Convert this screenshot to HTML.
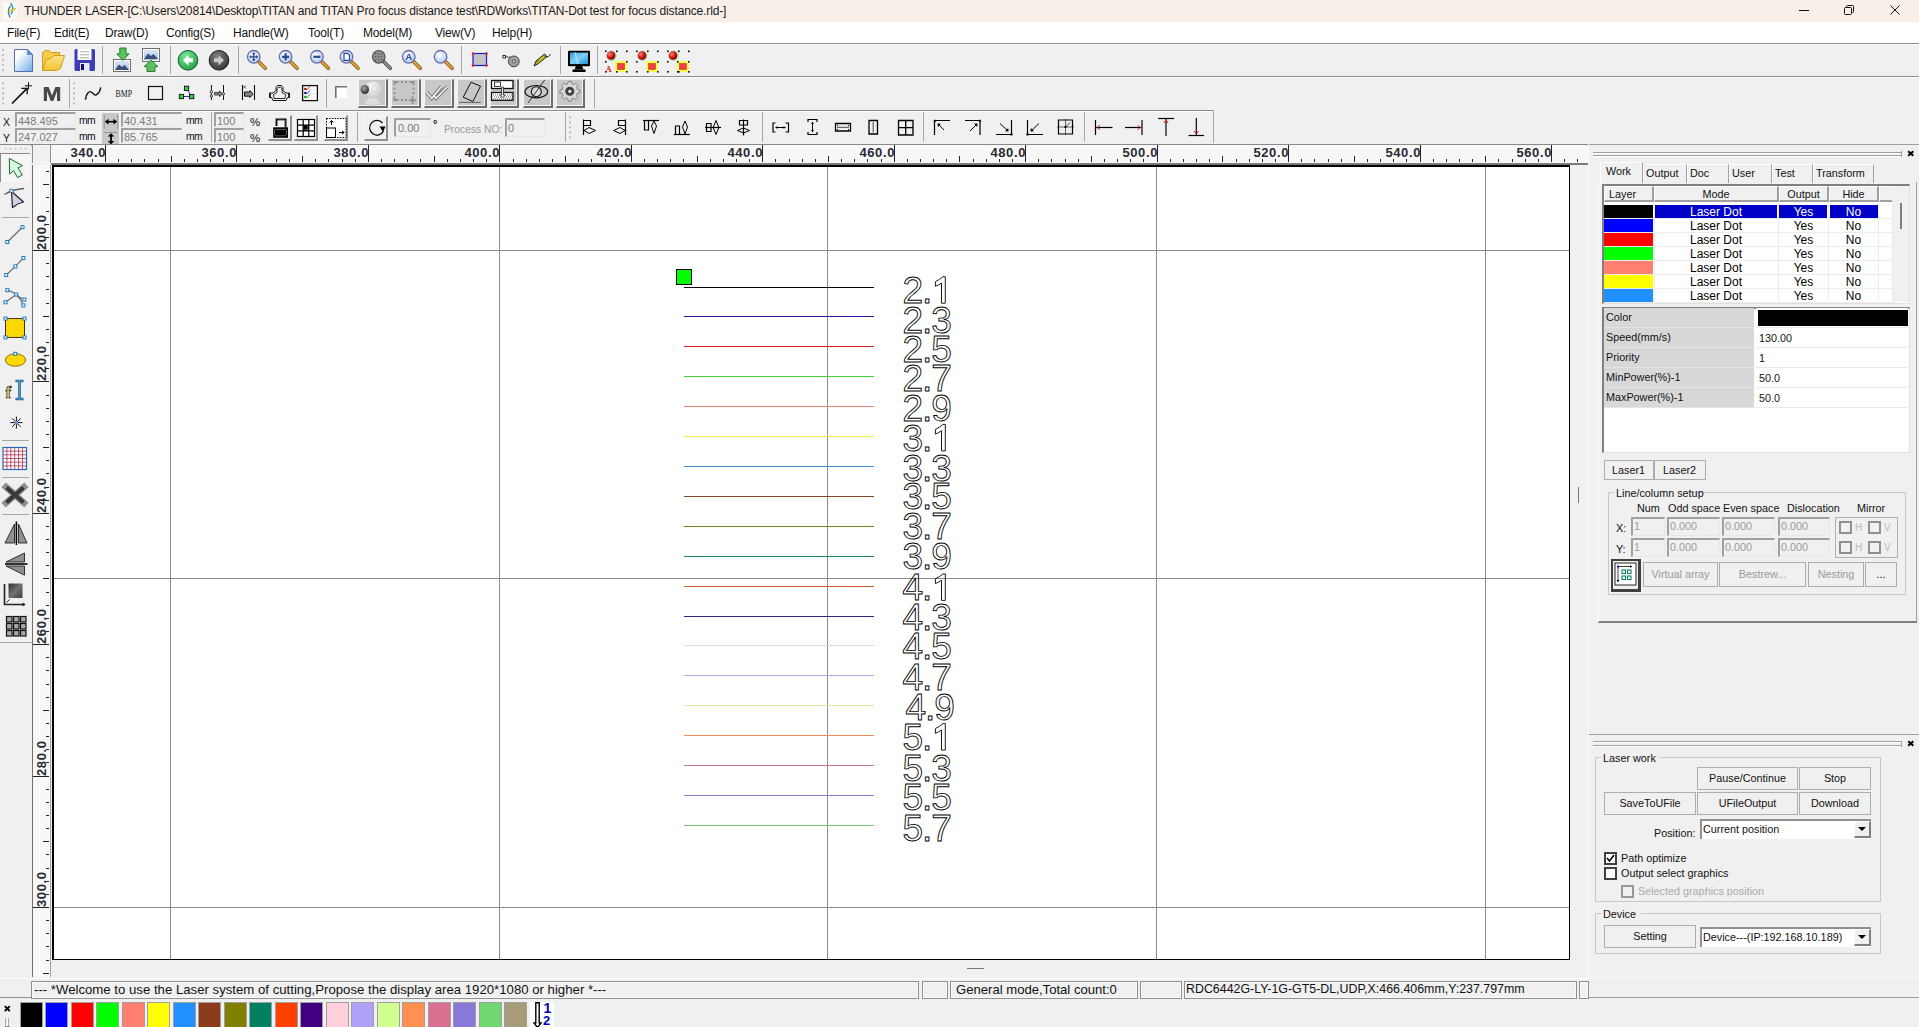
<!DOCTYPE html><html><head><meta charset="utf-8"><style>
html,body{margin:0;padding:0}
body{width:1919px;height:1027px;position:relative;overflow:hidden;background:#f0f0f0;font-family:"Liberation Sans",sans-serif;color:#000}
div{position:absolute;box-sizing:border-box}
.t{white-space:pre;line-height:1}
svg{position:absolute;overflow:visible}
.inp{background:#f0f0f0;border-top:2px solid #a0a0a0;border-left:2px solid #a0a0a0;border-right:1px solid #e8e8e8;border-bottom:1px solid #e8e8e8}
.btn{background:#f0f0f0;border:1px solid #adadad}
.grp{border:1px solid #c8c8c8}
.sep{background:#a8a8a8;width:1px}
</style></head><body>
<div style="left:0px;top:0px;width:1919px;height:22px;background:#f8f0e8"></div>
<div class="t" style="left:24px;top:5.2px;font-size:12px;letter-spacing:-0.14px;color:#1a1a1a">THUNDER LASER-[C:\Users\20814\Desktop\TITAN and TITAN Pro focus distance test\RDWorks\TITAN-Dot test for focus distance.rld-]</div>
<svg style="left:0px;top:0px" width="22" height="22" viewBox="0 0 22 22" ><rect x="3" y="2.5" width="14" height="17.5" fill="#fdfaf6"/><path d="M10.5 6 Q6.5 10.5 10 17.5" fill="none" stroke="#2a7aa8" stroke-width="1.3"/><path d="M10.5 3 Q15 8 11 14.5" fill="none" stroke="#2a8ac0" stroke-width="1.3"/><path d="M8.5 11.8 L16 8.5" stroke="#e0c030" stroke-width="1.6"/></svg>
<svg style="left:1799px;top:4px" width="11" height="12" viewBox="0 0 11 12" ><line x1="0" y1="6.5" x2="10" y2="6.5" stroke="#111" stroke-width="1"/></svg>
<svg style="left:1844px;top:5px" width="11" height="11" viewBox="0 0 11 11" ><rect x="0.5" y="2.5" width="7" height="7" rx="1" fill="none" stroke="#111"/><path d="M2.5 2.5 V1.5 a1 1 0 0 1 1 -1 H8.5 a1 1 0 0 1 1 1 V6.5 a1 1 0 0 1 -1 1 H7.5" fill="none" stroke="#111"/></svg>
<svg style="left:1890px;top:5px" width="11" height="11" viewBox="0 0 11 11" ><path d="M0.5 0.5 L9.5 9.5 M9.5 0.5 L0.5 9.5" stroke="#111" stroke-width="1"/></svg>
<div style="left:0px;top:22px;width:1919px;height:21px;background:#fff"></div>
<div style="left:0px;top:43px;width:1919px;height:1px;background:#8c8c8c"></div>
<div class="t" style="left:7px;top:26.5px;font-size:12px;letter-spacing:-0.2px;color:#111">File(F)</div>
<div class="t" style="left:54px;top:26.5px;font-size:12px;letter-spacing:-0.2px;color:#111">Edit(E)</div>
<div class="t" style="left:105px;top:26.5px;font-size:12px;letter-spacing:-0.2px;color:#111">Draw(D)</div>
<div class="t" style="left:166px;top:26.5px;font-size:12px;letter-spacing:-0.2px;color:#111">Config(S)</div>
<div class="t" style="left:233px;top:26.5px;font-size:12px;letter-spacing:-0.2px;color:#111">Handle(W)</div>
<div class="t" style="left:308px;top:26.5px;font-size:12px;letter-spacing:-0.2px;color:#111">Tool(T)</div>
<div class="t" style="left:363px;top:26.5px;font-size:12px;letter-spacing:-0.2px;color:#111">Model(M)</div>
<div class="t" style="left:435px;top:26.5px;font-size:12px;letter-spacing:-0.2px;color:#111">View(V)</div>
<div class="t" style="left:492px;top:26.5px;font-size:12px;letter-spacing:-0.2px;color:#111">Help(H)</div>
<div style="left:0px;top:76px;width:1919px;height:1px;background:#8c8c8c"></div>
<div style="left:0px;top:77px;width:1919px;height:1px;background:#fcfcfc"></div>
<div style="left:0px;top:44px;width:1919px;height:1px;background:#fcfcfc"></div>
<div style="left:0px;top:111px;width:1213px;height:1px;background:#fcfcfc"></div>
<div style="left:0px;top:110px;width:1213px;height:1px;background:#8c8c8c"></div>
<div style="left:1213px;top:110px;width:1px;height:33px;background:#a8a8a8"></div>
<div style="left:102px;top:46px;width:1px;height:28px;background:#a8a8a8"></div>
<div style="left:170px;top:46px;width:1px;height:28px;background:#a8a8a8"></div>
<div style="left:238px;top:46px;width:1px;height:28px;background:#a8a8a8"></div>
<div style="left:461px;top:46px;width:1px;height:28px;background:#a8a8a8"></div>
<div style="left:560px;top:46px;width:1px;height:28px;background:#a8a8a8"></div>
<div style="left:597px;top:46px;width:1px;height:28px;background:#a8a8a8"></div>
<div style="left:69px;top:79px;width:1px;height:29px;background:#a8a8a8"></div>
<div style="left:326px;top:79px;width:1px;height:29px;background:#a8a8a8"></div>
<div style="left:594px;top:79px;width:1px;height:29px;background:#a8a8a8"></div>
<div style="left:211px;top:112px;width:1px;height:30px;background:#a8a8a8"></div>
<div style="left:357px;top:112px;width:1px;height:30px;background:#a8a8a8"></div>
<div style="left:565px;top:112px;width:1px;height:30px;background:#a8a8a8"></div>
<div style="left:762px;top:112px;width:1px;height:30px;background:#a8a8a8"></div>
<div style="left:923px;top:112px;width:1px;height:30px;background:#a8a8a8"></div>
<div style="left:1084px;top:112px;width:1px;height:30px;background:#a8a8a8"></div>
<svg style="left:0;top:0" width="1919" height="1027" viewBox="0 0 1919 1027"><defs>
<linearGradient id="gdoc" x1="0" y1="0" x2="1" y2="1"><stop offset="0.25" stop-color="#fff"/><stop offset="1" stop-color="#6aaae6"/></linearGradient>
<linearGradient id="gfold" x1="0" y1="0" x2="0" y2="1"><stop offset="0" stop-color="#fde48a"/><stop offset="1" stop-color="#f2c230"/></linearGradient>
<radialGradient id="ggreen" cx="0.4" cy="0.3" r="0.8"><stop offset="0" stop-color="#7ee8a0"/><stop offset="1" stop-color="#1e9a40"/></radialGradient>
<radialGradient id="ggrey" cx="0.4" cy="0.3" r="0.8"><stop offset="0" stop-color="#808080"/><stop offset="1" stop-color="#303030"/></radialGradient>
<radialGradient id="glens" cx="0.4" cy="0.35" r="0.7"><stop offset="0" stop-color="#ffffff"/><stop offset="1" stop-color="#a8c8f0"/></radialGradient>
<linearGradient id="gscreen" x1="0" y1="0" x2="1" y2="1"><stop offset="0" stop-color="#30a0e0"/><stop offset="0.5" stop-color="#80d0f8"/><stop offset="1" stop-color="#1890d8"/></linearGradient>
<linearGradient id="gpic" x1="0" y1="0" x2="0" y2="1"><stop offset="0" stop-color="#d8e8f8"/><stop offset="1" stop-color="#a8c0e0"/></linearGradient>
<radialGradient id="gball" cx="0.35" cy="0.35" r="0.7"><stop offset="0" stop-color="#ff8080"/><stop offset="0.6" stop-color="#d01010"/><stop offset="1" stop-color="#700000"/></radialGradient>
</defs><rect x="2.2" y="49" width="1.8" height="1.8" fill="#b4b4b4"/><rect x="2.2" y="54" width="1.8" height="1.8" fill="#b4b4b4"/><rect x="2.2" y="59" width="1.8" height="1.8" fill="#b4b4b4"/><rect x="2.2" y="64" width="1.8" height="1.8" fill="#b4b4b4"/><rect x="2.2" y="69" width="1.8" height="1.8" fill="#b4b4b4"/><path d="M14.5 49.5 H27.5 L32.5 54.5 V71.5 H14.5 Z" fill="url(#gdoc)" stroke="#5870b0" stroke-width="1"/><path d="M27.5 49.5 V54.5 H32.5 Z" fill="#4a90e0" stroke="#5870b0" stroke-width="0.6"/><path d="M42.5 70.5 V53 L44.8 50.5 H49 L51 52.5 H59.5 V56 L64.5 56 Z" fill="#f4cc48" stroke="#d49a20" stroke-width="1"/><path d="M42.5 70.5 L46 59.5 L51 58.5 L54 55.5 H64.5 L60.5 68.5 L56.5 70.5 Z" fill="url(#gfold)" stroke="#d49a20" stroke-width="1"/><path d="M74.5 50.5 Q74.5 49 76 49 H93.5 Q95 49 95 50.5 V69.5 Q95 71 93.5 71 H76 Q74.5 71 74.5 69.5 Z" fill="#3c3cb4"/><rect x="77.5" y="49" width="14" height="11" fill="#fff"/><path d="M80 51.8 H89 M80 54.8 H89 M80 57.8 H89" stroke="#a0a0a0" stroke-width="0.9"/><rect x="80" y="63" width="9.5" height="8" fill="#e8e8f0"/><rect x="81" y="64" width="3" height="6" fill="#10106a"/><rect x="113.5" y="59.5" width="17" height="12" fill="#fff" stroke="#707070"/><rect x="115" y="61" width="14" height="9" fill="url(#gpic)"/><path d="M115 70 L119 64.5 L122 67 L124.5 65 L129 70 Z" fill="#3a5078"/><path d="M119.8 48 H126 V53.8 H129 L122.9 60.5 L116.8 53.8 H119.8 Z" fill="#5cc060" stroke="#1a7a20" stroke-width="0.9"/><rect x="142.5" y="48.5" width="17" height="13" fill="#fff" stroke="#707070"/><rect x="144" y="50" width="14" height="10" fill="url(#gpic)"/><path d="M144 59 L148 53.5 L151 56 L153.5 54 L158 59 Z" fill="#3a5078"/><path d="M147 71.5 H155 V66.7 H158 L151 60 L144 66.7 H147 Z" fill="#5cc060" stroke="#1a7a20" stroke-width="0.9"/><circle cx="188" cy="60.3" r="9.8" fill="url(#ggreen)" stroke="#0a5a20" stroke-width="1"/><path d="M183 60.3 L188.5 55 V58.3 H193 V62.3 H188.5 V65.6 Z" fill="#fff"/><circle cx="219" cy="60.3" r="9.8" fill="url(#ggrey)" stroke="#1a1a1a" stroke-width="1"/><path d="M224 60.3 L218.5 55 V58.3 H214 V62.3 H218.5 V65.6 Z" fill="#c8c8c8"/><line x1="258.25" y1="61.3" x2="265.25" y2="68.3" stroke="#805020" stroke-width="3.6" stroke-linecap="round"/><line x1="258.25" y1="61.3" x2="265.25" y2="68.3" stroke="#e0a030" stroke-width="2.2" stroke-linecap="round"/><circle cx="253.75" cy="56.8" r="6.3" fill="url(#glens)" stroke="#6a6aa8" stroke-width="1.3"/><path d="M249.75 56.8 H257.75 M253.75 52.8 V60.8" stroke="#2a4a90" stroke-width="1.3"/><path d="M249.25 56.8 l2 -1.8 v3.6 Z M258.25 56.8 l-2 -1.8 v3.6 Z M253.75 52.3 l-1.8 2 h3.6 Z M253.75 61.3 l-1.8 -2 h3.6 Z" fill="#2a4a90"/><line x1="290.1" y1="61.3" x2="297.1" y2="68.3" stroke="#805020" stroke-width="3.6" stroke-linecap="round"/><line x1="290.1" y1="61.3" x2="297.1" y2="68.3" stroke="#e0a030" stroke-width="2.2" stroke-linecap="round"/><circle cx="285.6" cy="56.8" r="6.3" fill="url(#glens)" stroke="#6a6aa8" stroke-width="1.3"/><path d="M282.1 56.8 H289.1 M285.6 53.3 V60.3" stroke="#2a4a90" stroke-width="2.2"/><line x1="321.4" y1="61.3" x2="328.4" y2="68.3" stroke="#805020" stroke-width="3.6" stroke-linecap="round"/><line x1="321.4" y1="61.3" x2="328.4" y2="68.3" stroke="#e0a030" stroke-width="2.2" stroke-linecap="round"/><circle cx="316.9" cy="56.8" r="6.3" fill="url(#glens)" stroke="#6a6aa8" stroke-width="1.3"/><path d="M313.4 56.8 H320.4" stroke="#2a4a90" stroke-width="2.2"/><line x1="351.0" y1="61.3" x2="358.0" y2="68.3" stroke="#805020" stroke-width="3.6" stroke-linecap="round"/><line x1="351.0" y1="61.3" x2="358.0" y2="68.3" stroke="#e0a030" stroke-width="2.2" stroke-linecap="round"/><circle cx="346.5" cy="56.8" r="6.3" fill="url(#glens)" stroke="#6a6aa8" stroke-width="1.3"/><path d="M344.0 53.3 H347.5 L349.5 55.3 V60.3 H344.0 Z" fill="#fff" stroke="#2a4a90" stroke-width="1.2"/><line x1="383.25" y1="61.3" x2="390.25" y2="68.3" stroke="#404040" stroke-width="3.6" stroke-linecap="round"/><line x1="383.25" y1="61.3" x2="390.25" y2="68.3" stroke="#909090" stroke-width="2.2" stroke-linecap="round"/><circle cx="378.75" cy="56.8" r="6.3" fill="#909090" stroke="#505050" stroke-width="1.2"/><rect x="375.25" y="53.3" width="1" height="1" fill="#303030"/><rect x="375.25" y="56.3" width="1" height="1" fill="#303030"/><rect x="375.25" y="59.3" width="1" height="1" fill="#303030"/><rect x="378.25" y="53.3" width="1" height="1" fill="#303030"/><rect x="378.25" y="56.3" width="1" height="1" fill="#303030"/><rect x="378.25" y="59.3" width="1" height="1" fill="#303030"/><rect x="381.25" y="53.3" width="1" height="1" fill="#303030"/><rect x="381.25" y="56.3" width="1" height="1" fill="#303030"/><rect x="381.25" y="59.3" width="1" height="1" fill="#303030"/><line x1="413.25" y1="61.3" x2="420.25" y2="68.3" stroke="#805020" stroke-width="3.6" stroke-linecap="round"/><line x1="413.25" y1="61.3" x2="420.25" y2="68.3" stroke="#e0a030" stroke-width="2.2" stroke-linecap="round"/><circle cx="408.75" cy="56.8" r="6.3" fill="url(#glens)" stroke="#6a6aa8" stroke-width="1.3"/><text x="408.75" y="60.3" text-anchor="middle" font-family="Liberation Sans" font-weight="bold" font-size="9.5" fill="#2a4a90">A</text><line x1="445.1" y1="61.3" x2="452.1" y2="68.3" stroke="#805020" stroke-width="3.6" stroke-linecap="round"/><line x1="445.1" y1="61.3" x2="452.1" y2="68.3" stroke="#e0a030" stroke-width="2.2" stroke-linecap="round"/><circle cx="440.6" cy="56.8" r="6.3" fill="url(#glens)" stroke="#6a6aa8" stroke-width="1.3"/><rect x="473" y="53.5" width="13.5" height="12" fill="#c4c4c4" stroke="#1a1ad0" stroke-width="1.2"/><circle cx="473" cy="53.5" r="1.3" fill="#e02020"/><circle cx="486.5" cy="53.5" r="1.3" fill="#e02020"/><circle cx="473" cy="65.5" r="1.3" fill="#e02020"/><circle cx="486.5" cy="65.5" r="1.3" fill="#e02020"/><rect x="503" y="55.5" width="2.5" height="2.5" fill="#fff" stroke="#000" stroke-width="0.8"/><path d="M505.5 56.8 L512 57.5" stroke="#000" stroke-width="0.7"/><circle cx="513.8" cy="61.4" r="5.4" fill="#a0a0a0" stroke="#404040" stroke-width="1"/><circle cx="513.8" cy="61.4" r="1.4" fill="#fff" stroke="#202020" stroke-width="0.8"/><path d="M534 66 L536 61 L544.5 54 L547 56.5 L538.5 63.5 Z" fill="#c8c020" stroke="#202020" stroke-width="1"/><path d="M544.5 56 C548 58 550 56 550 54" fill="none" stroke="#202020" stroke-width="1"/><path d="M536 63 L539 60" stroke="#707000" stroke-width="1"/><rect x="568" y="50.8" width="22" height="15.5" rx="1" fill="#000"/><rect x="570" y="52.6" width="18" height="11.5" fill="url(#gscreen)"/><path d="M574 52.6 L577 64 H579 L576 52.6 Z" fill="#b8e8ff" opacity="0.7"/><path d="M576 66 H582 L583.5 69.5 H574.5 Z" fill="#000"/><rect x="572.5" y="69.5" width="13" height="2.5" fill="#000"/><rect x="615" y="61" width="12" height="11" fill="#ffff40" opacity="0.9"/><rect x="617.5" y="63.5" width="7" height="6" fill="#f04040" stroke="#c02020" stroke-width="0.5"/><circle cx="611.5" cy="55.8" r="5.2" fill="#50d050" opacity="0.45"/><circle cx="611" cy="55.5" r="4.3" fill="url(#gball)"/><rect x="605" y="50.5" width="1.6" height="1.6" fill="#000"/><rect x="616" y="50.5" width="1.6" height="1.6" fill="#000"/><rect x="626" y="50.5" width="1.6" height="1.6" fill="#000"/><rect x="605" y="61.0" width="1.6" height="1.6" fill="#000"/><rect x="626" y="61.0" width="1.6" height="1.6" fill="#000"/><rect x="605" y="71.0" width="1.6" height="1.6" fill="#000"/><rect x="616" y="71.0" width="1.6" height="1.6" fill="#000"/><rect x="626" y="71.0" width="1.6" height="1.6" fill="#000"/><text x="605.5" y="72" font-family="Liberation Serif" font-size="8.5" fill="#e02020" font-weight="bold">A</text><rect x="646" y="61" width="12" height="11" fill="#ffff40" opacity="0.9"/><rect x="648.5" y="63.5" width="7" height="6" fill="#f04040" stroke="#c02020" stroke-width="0.5"/><circle cx="642.5" cy="55.8" r="5.2" fill="#50d050" opacity="0.45"/><circle cx="642" cy="55.5" r="4.3" fill="url(#gball)"/><rect x="636" y="50.5" width="1.6" height="1.6" fill="#000"/><rect x="647" y="50.5" width="1.6" height="1.6" fill="#000"/><rect x="657" y="50.5" width="1.6" height="1.6" fill="#000"/><rect x="636" y="61.0" width="1.6" height="1.6" fill="#000"/><rect x="657" y="61.0" width="1.6" height="1.6" fill="#000"/><rect x="636" y="71.0" width="1.6" height="1.6" fill="#000"/><rect x="647" y="71.0" width="1.6" height="1.6" fill="#000"/><rect x="657" y="71.0" width="1.6" height="1.6" fill="#000"/><rect x="677" y="61" width="12" height="11" fill="#ffff40" opacity="0.9"/><rect x="679.5" y="63.5" width="7" height="6" fill="#f04040" stroke="#c02020" stroke-width="0.5"/><circle cx="673.5" cy="55.8" r="5.2" fill="#50d050" opacity="0.45"/><circle cx="673" cy="55.5" r="4.3" fill="url(#gball)"/><rect x="667" y="50.5" width="1.6" height="1.6" fill="#000"/><rect x="678" y="50.5" width="1.6" height="1.6" fill="#000"/><rect x="688" y="50.5" width="1.6" height="1.6" fill="#000"/><rect x="667" y="61.0" width="1.6" height="1.6" fill="#000"/><rect x="688" y="61.0" width="1.6" height="1.6" fill="#000"/><rect x="667" y="71.0" width="1.6" height="1.6" fill="#000"/><rect x="678" y="71.0" width="1.6" height="1.6" fill="#000"/><rect x="688" y="71.0" width="1.6" height="1.6" fill="#000"/><rect x="677" y="61.0" width="1.6" height="1.6" fill="#000"/><rect x="677" y="71.0" width="1.6" height="1.6" fill="#000"/></svg>
<div style="left:358px;top:79px;width:30px;height:29px;background:#c8c8c8;border-left:1px solid #f4f4f4;border-top:1px solid #e8e8e8;border-right:2px solid #6e6e6e;border-bottom:2px solid #6e6e6e;box-shadow:inset -1px -1px 0 #f4f4f4"></div><div style="left:391px;top:79px;width:30px;height:29px;background:#c8c8c8;border-left:1px solid #f4f4f4;border-top:1px solid #e8e8e8;border-right:2px solid #6e6e6e;border-bottom:2px solid #6e6e6e;box-shadow:inset -1px -1px 0 #f4f4f4"></div><div style="left:424px;top:79px;width:30px;height:29px;background:#c8c8c8;border-left:1px solid #f4f4f4;border-top:1px solid #e8e8e8;border-right:2px solid #6e6e6e;border-bottom:2px solid #6e6e6e;box-shadow:inset -1px -1px 0 #f4f4f4"></div><div style="left:457px;top:79px;width:30px;height:29px;background:#c8c8c8;border-left:1px solid #f4f4f4;border-top:1px solid #e8e8e8;border-right:2px solid #6e6e6e;border-bottom:2px solid #6e6e6e;box-shadow:inset -1px -1px 0 #f4f4f4"></div><div style="left:490px;top:79px;width:29px;height:29px;background:#c8c8c8;border-left:1px solid #f4f4f4;border-top:1px solid #e8e8e8;border-right:2px solid #6e6e6e;border-bottom:2px solid #6e6e6e;box-shadow:inset -1px -1px 0 #f4f4f4"></div><div style="left:523px;top:79px;width:30px;height:29px;background:#c8c8c8;border-left:1px solid #f4f4f4;border-top:1px solid #e8e8e8;border-right:2px solid #6e6e6e;border-bottom:2px solid #6e6e6e;box-shadow:inset -1px -1px 0 #f4f4f4"></div><div style="left:556px;top:79px;width:29px;height:29px;background:#c8c8c8;border-left:1px solid #f4f4f4;border-top:1px solid #e8e8e8;border-right:2px solid #6e6e6e;border-bottom:2px solid #6e6e6e;box-shadow:inset -1px -1px 0 #f4f4f4"></div>
<svg style="left:0;top:0" width="1919" height="1027" viewBox="0 0 1919 1027"><rect x="2.2" y="82.5" width="1.8" height="1.8" fill="#b4b4b4"/><rect x="73.2" y="82.5" width="1.8" height="1.8" fill="#b4b4b4"/><rect x="2.2" y="87.5" width="1.8" height="1.8" fill="#b4b4b4"/><rect x="73.2" y="87.5" width="1.8" height="1.8" fill="#b4b4b4"/><rect x="2.2" y="92.5" width="1.8" height="1.8" fill="#b4b4b4"/><rect x="73.2" y="92.5" width="1.8" height="1.8" fill="#b4b4b4"/><rect x="2.2" y="97.5" width="1.8" height="1.8" fill="#b4b4b4"/><rect x="73.2" y="97.5" width="1.8" height="1.8" fill="#b4b4b4"/><rect x="2.2" y="102.5" width="1.8" height="1.8" fill="#b4b4b4"/><rect x="73.2" y="102.5" width="1.8" height="1.8" fill="#b4b4b4"/><path d="M12.5 103 L26.8 88.7" stroke="#111" stroke-width="1.7" stroke-linecap="round"/><path d="M21.3 88.3 H27.2 V94.2" fill="none" stroke="#111" stroke-width="1.3"/><path d="M28.5 82.2 V89.5 M24.8 85.8 H32" stroke="#111" stroke-width="1"/><path d="M43.8 101 V87.1 H48.6 L52 95.6 L55.4 87.1 H60.2 V101 H57 V91.3 L53.3 101 H50.7 L47 91.3 V101 Z" fill="#4a4a4a"/><path d="M85.5 99 C86 94 89 91 91 91.8 C93 92.5 94 96 96 95 C98.5 94 100.5 90 100.7 87.4" fill="none" stroke="#111" stroke-width="1.4"/><circle cx="85.6" cy="98.8" r="0.9" fill="#111"/><text x="115.5" y="97.3" font-family="Liberation Serif" font-size="9.6" fill="#222" textLength="16.5" lengthAdjust="spacingAndGlyphs">BMP</text><rect x="148.5" y="86.5" width="14" height="13" fill="none" stroke="#111" stroke-width="1.2"/><path d="M186.5 88.5 L191.5 96.5 M181.5 96.5 H191.5" stroke="#1a1ab0" stroke-width="0.9"/><rect x="184.4" y="86.2" width="4.3" height="4.3" fill="#30d040" stroke="#111" stroke-width="0.9"/><rect x="179.3" y="94.4" width="4.3" height="4.3" fill="#30d040" stroke="#111" stroke-width="0.9"/><rect x="189.5" y="94.4" width="4.3" height="4.3" fill="#30d040" stroke="#111" stroke-width="0.9"/><path d="M211.4 85 V100 M223.5 85 V100" stroke="#111" stroke-width="1"/><circle cx="211.4" cy="91.8" r="1.2" fill="#fff" stroke="#111" stroke-width="0.8"/><circle cx="211.4" cy="96" r="1.2" fill="#fff" stroke="#111" stroke-width="0.8"/><circle cx="223.5" cy="93.8" r="1.2" fill="#fff" stroke="#111" stroke-width="0.8"/><path d="M214.5 92.5 H219.5 V91 L222.5 93.8 L219.5 96.6 V95 H214.5 Z" fill="#888" stroke="#111" stroke-width="0.7"/><path d="M242.5 85 V100 M254.5 85 V100" stroke="#111" stroke-width="1.1"/><path d="M243 85.5 L246 88.5 M246 85.5 L243 88.5" stroke="#111" stroke-width="0.6"/><path d="M244.5 92 H250 V90.5 L253 94.2 L250 97.5 V96.2 H244.5 Z" fill="#888" stroke="#111" stroke-width="1"/><path d="M273 93 L276 90.5 V87.5 L277.5 85.5 H281.5 L283 87.5 V90.5 L286 93 H289.5 V97.5 H287.5 L286 100.5 H273 L271.5 97.5 H269.5 V93 Z" fill="none" stroke="#111" stroke-width="1"/><path d="M273.5 94.5 L277 92.5 V88.8 L278.2 87.3 H280.8 L282 88.8 V92.5 L285.5 94.5 L285 98.5 H274 Z" fill="none" stroke="#111" stroke-width="0.9"/><rect x="269" y="93" width="1.8" height="4.5" fill="#111"/><rect x="288.2" y="93" width="1.8" height="4.5" fill="#111"/><rect x="302.6" y="85.6" width="14.8" height="15" fill="#fff" stroke="#111" stroke-width="1.3"/><path d="M309 89.5 H315.5 M309 93.5 H315.5 M309 97.5 H315.5" stroke="#e4e4e4" stroke-width="0.8"/><rect x="304.2" y="87.8" width="2.2" height="2.2" fill="#b01010"/><path d="M305.5 89.3 L307 89.8 L310 86.3" fill="none" stroke="#b01010" stroke-width="0.9"/><rect x="304.2" y="91.8" width="2.2" height="2.2" fill="#1010a0"/><path d="M305.5 93.3 L307 93.8 L310 90.3" fill="none" stroke="#1010a0" stroke-width="0.9"/><rect x="304.2" y="95.8" width="2.2" height="2.2" fill="#109010"/><path d="M305.5 97.3 L307 97.8 L310 94.3" fill="none" stroke="#109010" stroke-width="0.9"/><rect x="335" y="86" width="12" height="12" fill="#fff"/><path d="M335.8 98 V86.8 H347" fill="none" stroke="#707070" stroke-width="1.6"/><defs><radialGradient id="gcam" cx="0.45" cy="0.35" r="0.7"><stop offset="0" stop-color="#fafafa"/><stop offset="1" stop-color="#c8c8c8"/></radialGradient><radialGradient id="glensg" cx="0.4" cy="0.35" r="0.7"><stop offset="0" stop-color="#a8a8a8"/><stop offset="1" stop-color="#202020"/></radialGradient></defs><ellipse cx="372.5" cy="102.5" rx="8.5" ry="2.8" fill="#dcdcdc" stroke="#c0c0c0" stroke-width="0.6"/><path d="M368 98 Q372.5 96 377 98 L378 101 H367 Z" fill="#e0e0e0"/><circle cx="373" cy="89.5" r="8.8" fill="url(#gcam)" stroke="#bdbdbd" stroke-width="0.6"/><circle cx="375" cy="89" r="3.2" fill="none" stroke="#c8c8c8" stroke-width="0.7"/><ellipse cx="364.8" cy="89.5" rx="4.2" ry="4.6" fill="url(#glensg)"/><path d="M394.5 85 V82 H398.5 M401 82 H403 M405 82 H407 M409.5 82 H413.5 V85 M413.5 87.5 V89.5 M413.5 92 V94 M394.5 87.5 V89.5 M394.5 92 V94 M394.5 96.5 V100 H398.5 M401 100 H403 M405 100 H407" fill="none" stroke="#909090" stroke-width="2"/><path d="M412.5 96.5 V104 M408.8 100.2 H416.2" stroke="#909090" stroke-width="2"/><path d="M426.5 92 L431.8 98.3 L441.5 86.5 M433.5 95 L436 98.3 L447.5 86.5" fill="none" stroke="#7a7a7a" stroke-width="3.6" stroke-linejoin="miter"/><path d="M426.5 92 L431.8 98.3 L441.5 86.5 M433.5 95 L436 98.3 L447.5 86.5" fill="none" stroke="#f4f4f4" stroke-width="1.5" stroke-linejoin="miter"/><path d="M471 82.2 L480.5 86.2 L472.9 101.5 L463.2 97.2 Z" fill="none" stroke="#111" stroke-width="1"/><path d="M459 102.4 H481" stroke="#606060" stroke-width="1"/><rect x="491.5" y="80.5" width="21.5" height="8" fill="#fff" stroke="#111" stroke-width="1.3"/><rect x="494.5" y="82" width="6" height="4.5" fill="#fff" stroke="#111" stroke-width="0.8"/><rect x="491.5" y="92.5" width="21.5" height="7.8" fill="#fff" stroke="#111" stroke-width="1.3"/><rect x="493" y="94.5" width="0.9" height="0.9" fill="#333"/><rect x="494" y="96.5" width="0.9" height="0.9" fill="#333"/><rect x="493" y="98.5" width="0.9" height="0.9" fill="#333"/><rect x="495" y="94.5" width="0.9" height="0.9" fill="#333"/><rect x="496" y="96.5" width="0.9" height="0.9" fill="#333"/><rect x="495" y="98.5" width="0.9" height="0.9" fill="#333"/><rect x="497" y="94.5" width="0.9" height="0.9" fill="#333"/><rect x="498" y="96.5" width="0.9" height="0.9" fill="#333"/><rect x="497" y="98.5" width="0.9" height="0.9" fill="#333"/><rect x="499" y="94.5" width="0.9" height="0.9" fill="#333"/><rect x="500" y="96.5" width="0.9" height="0.9" fill="#333"/><rect x="499" y="98.5" width="0.9" height="0.9" fill="#333"/><rect x="501" y="94.5" width="0.9" height="0.9" fill="#333"/><rect x="502" y="96.5" width="0.9" height="0.9" fill="#333"/><rect x="501" y="98.5" width="0.9" height="0.9" fill="#333"/><rect x="503" y="94.5" width="0.9" height="0.9" fill="#333"/><rect x="504" y="96.5" width="0.9" height="0.9" fill="#333"/><rect x="503" y="98.5" width="0.9" height="0.9" fill="#333"/><rect x="505" y="94.5" width="0.9" height="0.9" fill="#333"/><rect x="506" y="96.5" width="0.9" height="0.9" fill="#333"/><rect x="505" y="98.5" width="0.9" height="0.9" fill="#333"/><rect x="507" y="94.5" width="0.9" height="0.9" fill="#333"/><rect x="508" y="96.5" width="0.9" height="0.9" fill="#333"/><rect x="507" y="98.5" width="0.9" height="0.9" fill="#333"/><rect x="509" y="94.5" width="0.9" height="0.9" fill="#333"/><rect x="510" y="96.5" width="0.9" height="0.9" fill="#333"/><rect x="509" y="98.5" width="0.9" height="0.9" fill="#333"/><rect x="511" y="94.5" width="0.9" height="0.9" fill="#333"/><rect x="512" y="96.5" width="0.9" height="0.9" fill="#333"/><rect x="511" y="98.5" width="0.9" height="0.9" fill="#333"/><path d="M501.5 87 H503.5 V95 H505 L502.5 98 L500 95 H501.5 Z" fill="#e8e8e8" stroke="#111" stroke-width="0.7"/><ellipse cx="536.3" cy="91.7" rx="11.3" ry="6.2" fill="none" stroke="#111" stroke-width="1.1"/><circle cx="536.3" cy="91.7" r="5" fill="#d8d8d8" stroke="#111" stroke-width="1.1"/><path d="M528 103 L544.7 80" stroke="#111" stroke-width="0.8"/><polygon points="577.37,89.41 579.68,89.74 579.68,92.86 577.37,93.19 576.49,95.32 577.89,97.18 575.68,99.39 573.82,97.99 571.69,98.87 571.36,101.18 568.24,101.18 567.91,98.87 565.78,97.99 563.92,99.39 561.71,97.18 563.11,95.32 562.23,93.19 559.92,92.86 559.92,89.74 562.23,89.41 563.11,87.28 561.71,85.42 563.92,83.21 565.78,84.61 567.91,83.73 568.24,81.42 571.36,81.42 571.69,83.73 573.82,84.61 575.68,83.21 577.89,85.42 576.49,87.28" fill="#d8d8d8" stroke="#707070" stroke-width="0.8"/><circle cx="569.8" cy="91.3" r="4.5" fill="#404040"/><circle cx="569.8" cy="91.3" r="1.6" fill="#f0f0f0"/></svg>
<div class="t" style="left:3px;top:117px;font-size:10.5px;color:#111">X</div>
<div class="t" style="left:3px;top:133px;font-size:10.5px;color:#111">Y</div>
<div class="inp" style="left:15px;top:112px;width:61px;height:15px"></div>
<div class="inp" style="left:15px;top:128px;width:61px;height:15px"></div>
<div class="t" style="left:18px;top:116px;font-size:11px;color:#7a7a7a">448.495</div>
<div class="t" style="left:18px;top:132px;font-size:11px;color:#7a7a7a">247.027</div>
<div class="t" style="left:79px;top:116px;font-size:10.4px;letter-spacing:-0.6px;color:#111">mm</div>
<div class="t" style="left:79px;top:132px;font-size:10.4px;letter-spacing:-0.6px;color:#111">mm</div>
<div style="left:102px;top:113px;width:17px;height:31px;background:#c8c8c8"></div>
<div class="inp" style="left:121px;top:112px;width:61px;height:15px"></div>
<div class="inp" style="left:121px;top:128px;width:61px;height:15px"></div>
<div class="t" style="left:124px;top:116px;font-size:11px;color:#7a7a7a">40.431</div>
<div class="t" style="left:124px;top:132px;font-size:11px;color:#7a7a7a">85.765</div>
<div class="t" style="left:186px;top:116px;font-size:10.4px;letter-spacing:-0.6px;color:#111">mm</div>
<div class="t" style="left:186px;top:132px;font-size:10.4px;letter-spacing:-0.6px;color:#111">mm</div>
<div class="inp" style="left:214px;top:112px;width:30px;height:15px"></div>
<div class="inp" style="left:214px;top:128px;width:30px;height:15px"></div>
<div class="t" style="left:217px;top:116px;font-size:11px;color:#7a7a7a">100</div>
<div class="t" style="left:217px;top:132px;font-size:11px;color:#7a7a7a">100</div>
<div class="t" style="left:250px;top:117px;font-size:11.5px;color:#111">%</div>
<div class="t" style="left:250px;top:133px;font-size:11.5px;color:#111">%</div>
<div style="left:268px;top:115px;width:24px;height:26px;background:#f0f0f0;border:1px solid #f8f8f8;border-right:2px solid #909090;border-bottom:2px solid #909090"></div>
<div style="left:294px;top:115px;width:24px;height:26px;background:#f0f0f0;border:1px solid #f8f8f8;border-right:2px solid #909090;border-bottom:2px solid #909090"></div>
<div style="left:324px;top:115px;width:24px;height:26px;background:#f0f0f0;border:1px solid #f8f8f8;border-right:2px solid #909090;border-bottom:2px solid #909090"></div>
<div style="left:364px;top:116px;width:24px;height:25px;background:#f0f0f0;border:1px solid #f8f8f8;border-right:2px solid #909090;border-bottom:2px solid #909090"></div>
<div class="inp" style="left:394px;top:118px;width:37px;height:19px"></div>
<div class="t" style="left:398px;top:123px;font-size:11px;color:#7a7a7a">0.00</div>
<div class="t" style="left:433px;top:119px;font-size:11px;color:#111;font-weight:bold">°</div>
<div class="t" style="left:444px;top:124.5px;font-size:10.3px;color:#9a9a9a">Process NO:</div>
<div class="inp" style="left:505px;top:118px;width:40px;height:19px"></div>
<div class="t" style="left:508px;top:123px;font-size:11px;color:#7a7a7a">0</div>
<svg style="left:0;top:0" width="1919" height="1027" viewBox="0 0 1919 1027"><path d="M104.3 115 V128.8 M117.6 115 V128.8" stroke="#8a8a8a" stroke-width="0.8"/><path d="M106 121.7 H116" stroke="#000" stroke-width="1.6"/><path d="M104.8 121.7 L108.5 118.8 V124.6 Z M117.2 121.7 L113.5 118.8 V124.6 Z" fill="#000"/><path d="M104 132.5 H118" stroke="#8a8a8a" stroke-width="0.8"/><path d="M111 135 V142" stroke="#000" stroke-width="1.8"/><path d="M111 133.3 L107.8 136.5 H114.2 Z M111 144.5 L107.8 141 H114.2 Z" fill="#000"/><path d="M276.5 126 V119.3 H285.6 V127.5" fill="none" stroke="#000" stroke-width="1.8"/><path d="M277 120 H285 V127" fill="none" stroke="#888" stroke-width="0.6"/><rect x="273.2" y="127.3" width="14.8" height="10.5" fill="#000"/><path d="M275.5 129.5 H285.5 L286.5 130.5 V134.8 L285.5 135.8 H275.5 L274.5 134.8 V130.5 Z" fill="none" stroke="#999" stroke-width="0.6"/><rect x="297.5" y="119.5" width="17" height="17" fill="#fff" stroke="#000" stroke-width="1.2"/><path d="M303.2 119.5 V136.5 M308.8 119.5 V136.5 M297.5 125.2 H314.5 M297.5 130.8 H314.5" stroke="#000" stroke-width="1.2"/><rect x="303.2" y="125.2" width="5.6" height="5.6" fill="#000"/><path d="M307.5 126.5 V129.5 H304.5" fill="none" stroke="#888" stroke-width="0.6"/><rect x="326.5" y="118.5" width="19.5" height="19" fill="#fff" stroke="#000" stroke-width="1" stroke-dasharray="1.5 1.2"/><rect x="326.5" y="128" width="9" height="9.5" fill="#fff" stroke="#000" stroke-width="1"/><path d="M331.5 125 V121 M329.8 122.5 L331.5 120.5 L333.2 122.5" fill="none" stroke="#000" stroke-width="1"/><path d="M339 132.5 H344 M342 130.8 L344.2 132.5 L342 134.2" fill="none" stroke="#000" stroke-width="1"/><path d="M382.5 123 A7.3 7.3 0 1 0 383.5 131" fill="none" stroke="#000" stroke-width="1.2"/><path d="M379.5 126.5 H385.5 L383 132 Z" fill="#000"/><rect x="569.2" y="116.5" width="1.8" height="1.8" fill="#b4b4b4"/><rect x="569.2" y="121.5" width="1.8" height="1.8" fill="#b4b4b4"/><rect x="569.2" y="126.5" width="1.8" height="1.8" fill="#b4b4b4"/><rect x="569.2" y="131.5" width="1.8" height="1.8" fill="#b4b4b4"/><rect x="569.2" y="136.5" width="1.8" height="1.8" fill="#b4b4b4"/><path d="M583.5 119.5 V135" fill="none" stroke="#000" stroke-width="1.2"/><path d="M584 120.5 H590.5 V125.5 H584" fill="none" stroke="#000" stroke-width="1.2"/><path d="M584 130.5 L589 127.5 L595.5 130.5 L589 133.5 Z" fill="none" stroke="#000" stroke-width="1"/><path d="M625.5 119.5 V135" fill="none" stroke="#000" stroke-width="1.2"/><path d="M625 120.5 H618.5 V125.5 H625" fill="none" stroke="#000" stroke-width="1.2"/><path d="M625 130.5 L620 127.5 L613.5 130.5 L620 133.5 Z" fill="none" stroke="#000" stroke-width="1"/><path d="M643 120.5 H659" fill="none" stroke="#000" stroke-width="1.2"/><path d="M644.5 121 V130 H648.5 V121" fill="none" stroke="#000" stroke-width="1.2"/><path d="M654 121 L656.5 126 L654 133.5 L651.5 126 Z" fill="none" stroke="#000" stroke-width="1"/><path d="M673.7 134.5 H690" fill="none" stroke="#000" stroke-width="1.2"/><path d="M675.5 134 V126 H679.5 V134" fill="none" stroke="#000" stroke-width="1.2"/><path d="M685 121 L687.5 127 L685 134 L682.5 127 Z" fill="none" stroke="#000" stroke-width="1"/><path d="M705 127.5 H721" fill="none" stroke="#000" stroke-width="1.2"/><path d="M706.5 123.5 H711 V131.5 H706.5 Z" fill="none" stroke="#000" stroke-width="1.2"/><path d="M716 120.5 L718.8 127.5 L716 134.5 L713.2 127.5 Z" fill="none" stroke="#000" stroke-width="1"/><path d="M743.5 119.5 V135.5" fill="none" stroke="#000" stroke-width="1.2"/><path d="M739.5 120.5 H747.5 V125 H739.5 Z" fill="none" stroke="#000" stroke-width="1.2"/><path d="M737.5 130.5 L743.5 128 L749.5 130.5 L743.5 133 Z" fill="none" stroke="#000" stroke-width="1"/><path d="M775.5 123 H773 V132 H775.5 M785.5 123 H788.5 V132 H785.5" fill="none" stroke="#000" stroke-width="1.2"/><path d="M775.5 127.5 H785.5" fill="none" stroke="#000" stroke-width="1"/><path d="M775.5 127.5 l2 -1.5 v3 Z M785.5 127.5 l-2 -1.5 v3 Z" fill="#000"/><path d="M808 122 V119.5 H817 V122 M808 132 V134.5 H817 V132" fill="none" stroke="#000" stroke-width="1.2"/><path d="M812.5 122 V132" fill="none" stroke="#000" stroke-width="1"/><path d="M812.5 122 l-1.5 2 h3 Z M812.5 132 l-1.5 -2 h3 Z" fill="#000"/><path d="M835.5 123.5 H850.5 V131 H835.5 Z" fill="none" stroke="#000" stroke-width="1.3"/><path d="M837 127.3 H849" fill="none" stroke="#000" stroke-width="0.7"/><rect x="837" y="125" width="1" height="1" fill="#000"/><rect x="848" y="125" width="1" height="1" fill="#000"/><rect x="837" y="129" width="1" height="1" fill="#000"/><rect x="848" y="129" width="1" height="1" fill="#000"/><path d="M869 120.5 H877.5 V134 H869 Z" fill="none" stroke="#000" stroke-width="1.3"/><path d="M873.2 122 V132.5" fill="none" stroke="#000" stroke-width="0.7"/><path d="M898.5 120.5 H913 V135 H898.5 Z M905.7 120.5 V135 M898.5 127.7 H913" fill="none" stroke="#000" stroke-width="1.3"/><path d="M934.5 135 V120.5 H950" fill="none" stroke="#000" stroke-width="1.2"/><path d="M938 124 L944 130" fill="none" stroke="#000" stroke-width="1"/><rect x="933.8" y="119.8" width="2" height="2" fill="#000"/><path d="M937.5 123.5 l3.5 0.3 l-3.2 3.2 Z" fill="#000"/><path d="M980 135 V120.5 H965" fill="none" stroke="#000" stroke-width="1.2"/><path d="M977 124 L970 131" fill="none" stroke="#000" stroke-width="1"/><rect x="979" y="119.8" width="2" height="2" fill="#000"/><path d="M977.5 123.5 l-3.5 0.3 l3.2 3.2 Z" fill="#000"/><path d="M1011.5 120 V134.5 H996" fill="none" stroke="#000" stroke-width="1.2"/><path d="M1008 131 L1000 123.5" fill="none" stroke="#000" stroke-width="1"/><rect x="1010.5" y="133.5" width="2" height="2" fill="#000"/><path d="M1008.5 131.5 l-3.5 -0.3 l3.2 -3.2 Z" fill="#000"/><path d="M1027.5 120 V134.5 H1043" fill="none" stroke="#000" stroke-width="1.2"/><path d="M1031 131 L1039 123.5" fill="none" stroke="#000" stroke-width="1"/><rect x="1026.5" y="133.5" width="2" height="2" fill="#000"/><path d="M1030.5 131.5 l3.5 -0.3 l-3.2 -3.2 Z" fill="#000"/><path d="M1058.5 120 H1072.5 V134 H1058.5 Z" fill="none" stroke="#000" stroke-width="1.2"/><path d="M1065.5 119 V135 M1057 127 H1074" fill="none" stroke="#000" stroke-width="0.6"/><path d="M1066 126.5 L1070 122.5" fill="none" stroke="#000" stroke-width="0.8"/><rect x="1064.5" y="126" width="2" height="2" fill="#000"/><path d="M1095.5 120 V135" fill="none" stroke="#000" stroke-width="1.2"/><path d="M1096 127.5 H1112.5" fill="none" stroke="#000" stroke-width="1.2"/><path d="M1097 127.5 L1100 125.3 M1097 127.5 L1100 129.7" stroke="#e02020" stroke-width="1" fill="none"/><path d="M1142 120 V135" fill="none" stroke="#000" stroke-width="1.2"/><path d="M1125 127.5 H1141.5" fill="none" stroke="#000" stroke-width="1.2"/><path d="M1140.5 127.5 L1137.5 125.3 M1140.5 127.5 L1137.5 129.7" stroke="#e02020" stroke-width="1" fill="none"/><path d="M1158 118.5 H1174" fill="none" stroke="#000" stroke-width="1.2"/><path d="M1166 119 V136" fill="none" stroke="#000" stroke-width="1.2"/><path d="M1166 120 L1163.8 123 M1166 120 L1168.2 123" stroke="#e02020" stroke-width="1" fill="none"/><path d="M1188.5 135.5 H1204" fill="none" stroke="#000" stroke-width="1.2"/><path d="M1196.3 118 V135" fill="none" stroke="#000" stroke-width="1.2"/><path d="M1196.3 134 L1194 131 M1196.3 134 L1198.6 131" stroke="#e02020" stroke-width="1" fill="none"/></svg>
<div style="left:0px;top:144px;width:1588px;height:2px;background:#8a8a8a"></div>
<div style="left:51px;top:145px;width:1537px;height:18px;background:#f8f8f8"></div>
<div style="left:32px;top:145px;width:19px;height:18px;background:#f0f0f0;border:1px solid #f8f8f8"></div>
<div style="left:32px;top:145px;width:1px;height:18px;background:#909090"></div>
<div style="left:50px;top:145px;width:1px;height:18px;background:#909090"></div>
<div style="left:51px;top:163px;width:1537px;height:2px;background:#7a7a7a"></div>
<svg style="left:0;top:0" width="1919" height="1027" viewBox="0 0 1919 1027"><g fill="#222"><rect x="66" y="159" width="1" height="3"/><rect x="79" y="159" width="1" height="3"/><rect x="92" y="159" width="1" height="3"/><rect x="105" y="145" width="1" height="17"/><rect x="118" y="159" width="1" height="3"/><rect x="131" y="159" width="1" height="3"/><rect x="144" y="159" width="1" height="3"/><rect x="158" y="159" width="1" height="3"/><rect x="171" y="156" width="1" height="6"/><rect x="184" y="159" width="1" height="3"/><rect x="197" y="159" width="1" height="3"/><rect x="210" y="159" width="1" height="3"/><rect x="223" y="159" width="1" height="3"/><rect x="236" y="145" width="1" height="17"/><rect x="250" y="159" width="1" height="3"/><rect x="263" y="159" width="1" height="3"/><rect x="276" y="159" width="1" height="3"/><rect x="289" y="159" width="1" height="3"/><rect x="302" y="156" width="1" height="6"/><rect x="315" y="159" width="1" height="3"/><rect x="328" y="159" width="1" height="3"/><rect x="342" y="159" width="1" height="3"/><rect x="355" y="159" width="1" height="3"/><rect x="368" y="145" width="1" height="17"/><rect x="381" y="159" width="1" height="3"/><rect x="394" y="159" width="1" height="3"/><rect x="407" y="159" width="1" height="3"/><rect x="420" y="159" width="1" height="3"/><rect x="434" y="156" width="1" height="6"/><rect x="447" y="159" width="1" height="3"/><rect x="460" y="159" width="1" height="3"/><rect x="473" y="159" width="1" height="3"/><rect x="486" y="159" width="1" height="3"/><rect x="499" y="145" width="1" height="17"/><rect x="513" y="159" width="1" height="3"/><rect x="526" y="159" width="1" height="3"/><rect x="539" y="159" width="1" height="3"/><rect x="552" y="159" width="1" height="3"/><rect x="565" y="156" width="1" height="6"/><rect x="578" y="159" width="1" height="3"/><rect x="591" y="159" width="1" height="3"/><rect x="605" y="159" width="1" height="3"/><rect x="618" y="159" width="1" height="3"/><rect x="631" y="145" width="1" height="17"/><rect x="644" y="159" width="1" height="3"/><rect x="657" y="159" width="1" height="3"/><rect x="670" y="159" width="1" height="3"/><rect x="683" y="159" width="1" height="3"/><rect x="697" y="156" width="1" height="6"/><rect x="710" y="159" width="1" height="3"/><rect x="723" y="159" width="1" height="3"/><rect x="736" y="159" width="1" height="3"/><rect x="749" y="159" width="1" height="3"/><rect x="762" y="145" width="1" height="17"/><rect x="775" y="159" width="1" height="3"/><rect x="789" y="159" width="1" height="3"/><rect x="802" y="159" width="1" height="3"/><rect x="815" y="159" width="1" height="3"/><rect x="828" y="156" width="1" height="6"/><rect x="841" y="159" width="1" height="3"/><rect x="854" y="159" width="1" height="3"/><rect x="867" y="159" width="1" height="3"/><rect x="881" y="159" width="1" height="3"/><rect x="894" y="145" width="1" height="17"/><rect x="907" y="159" width="1" height="3"/><rect x="920" y="159" width="1" height="3"/><rect x="933" y="159" width="1" height="3"/><rect x="946" y="159" width="1" height="3"/><rect x="959" y="156" width="1" height="6"/><rect x="973" y="159" width="1" height="3"/><rect x="986" y="159" width="1" height="3"/><rect x="999" y="159" width="1" height="3"/><rect x="1012" y="159" width="1" height="3"/><rect x="1025" y="145" width="1" height="17"/><rect x="1038" y="159" width="1" height="3"/><rect x="1051" y="159" width="1" height="3"/><rect x="1065" y="159" width="1" height="3"/><rect x="1078" y="159" width="1" height="3"/><rect x="1091" y="156" width="1" height="6"/><rect x="1104" y="159" width="1" height="3"/><rect x="1117" y="159" width="1" height="3"/><rect x="1130" y="159" width="1" height="3"/><rect x="1143" y="159" width="1" height="3"/><rect x="1157" y="145" width="1" height="17"/><rect x="1170" y="159" width="1" height="3"/><rect x="1183" y="159" width="1" height="3"/><rect x="1196" y="159" width="1" height="3"/><rect x="1209" y="159" width="1" height="3"/><rect x="1222" y="156" width="1" height="6"/><rect x="1236" y="159" width="1" height="3"/><rect x="1249" y="159" width="1" height="3"/><rect x="1262" y="159" width="1" height="3"/><rect x="1275" y="159" width="1" height="3"/><rect x="1288" y="145" width="1" height="17"/><rect x="1301" y="159" width="1" height="3"/><rect x="1314" y="159" width="1" height="3"/><rect x="1328" y="159" width="1" height="3"/><rect x="1341" y="159" width="1" height="3"/><rect x="1354" y="156" width="1" height="6"/><rect x="1367" y="159" width="1" height="3"/><rect x="1380" y="159" width="1" height="3"/><rect x="1393" y="159" width="1" height="3"/><rect x="1406" y="159" width="1" height="3"/><rect x="1420" y="145" width="1" height="17"/><rect x="1433" y="159" width="1" height="3"/><rect x="1446" y="159" width="1" height="3"/><rect x="1459" y="159" width="1" height="3"/><rect x="1472" y="159" width="1" height="3"/><rect x="1485" y="156" width="1" height="6"/><rect x="1498" y="159" width="1" height="3"/><rect x="1512" y="159" width="1" height="3"/><rect x="1525" y="159" width="1" height="3"/><rect x="1538" y="159" width="1" height="3"/><rect x="1551" y="145" width="1" height="17"/><rect x="1564" y="159" width="1" height="3"/><rect x="1577" y="159" width="1" height="3"/></g></svg>
<div class="t" style="left:47px;top:146px;width:59px;text-align:right;font-size:13px;letter-spacing:0.6px;font-weight:bold;color:#2a2a35">340.0</div>
<div class="t" style="left:178px;top:146px;width:59px;text-align:right;font-size:13px;letter-spacing:0.6px;font-weight:bold;color:#2a2a35">360.0</div>
<div class="t" style="left:310px;top:146px;width:59px;text-align:right;font-size:13px;letter-spacing:0.6px;font-weight:bold;color:#2a2a35">380.0</div>
<div class="t" style="left:441px;top:146px;width:59px;text-align:right;font-size:13px;letter-spacing:0.6px;font-weight:bold;color:#2a2a35">400.0</div>
<div class="t" style="left:573px;top:146px;width:59px;text-align:right;font-size:13px;letter-spacing:0.6px;font-weight:bold;color:#2a2a35">420.0</div>
<div class="t" style="left:704px;top:146px;width:59px;text-align:right;font-size:13px;letter-spacing:0.6px;font-weight:bold;color:#2a2a35">440.0</div>
<div class="t" style="left:836px;top:146px;width:59px;text-align:right;font-size:13px;letter-spacing:0.6px;font-weight:bold;color:#2a2a35">460.0</div>
<div class="t" style="left:967px;top:146px;width:59px;text-align:right;font-size:13px;letter-spacing:0.6px;font-weight:bold;color:#2a2a35">480.0</div>
<div class="t" style="left:1099px;top:146px;width:59px;text-align:right;font-size:13px;letter-spacing:0.6px;font-weight:bold;color:#2a2a35">500.0</div>
<div class="t" style="left:1230px;top:146px;width:59px;text-align:right;font-size:13px;letter-spacing:0.6px;font-weight:bold;color:#2a2a35">520.0</div>
<div class="t" style="left:1362px;top:146px;width:59px;text-align:right;font-size:13px;letter-spacing:0.6px;font-weight:bold;color:#2a2a35">540.0</div>
<div class="t" style="left:1493px;top:146px;width:59px;text-align:right;font-size:13px;letter-spacing:0.6px;font-weight:bold;color:#2a2a35">560.0</div>
<div style="left:32px;top:165px;width:1px;height:812px;background:#707070"></div>
<div style="left:33px;top:165px;width:17px;height:812px;background:#f8f8f8"></div>
<div style="left:50px;top:165px;width:1px;height:812px;background:#a0a0a0"></div>
<svg style="left:0;top:0" width="1919" height="1027" viewBox="0 0 1919 1027"><g fill="#222"><rect x="46" y="171" width="3" height="1"/><rect x="43" y="184" width="6" height="1"/><rect x="46" y="197" width="3" height="1"/><rect x="46" y="211" width="3" height="1"/><rect x="46" y="224" width="3" height="1"/><rect x="46" y="237" width="3" height="1"/><rect x="33" y="250" width="16" height="1"/><rect x="46" y="263" width="3" height="1"/><rect x="46" y="276" width="3" height="1"/><rect x="46" y="289" width="3" height="1"/><rect x="46" y="303" width="3" height="1"/><rect x="43" y="316" width="6" height="1"/><rect x="46" y="329" width="3" height="1"/><rect x="46" y="342" width="3" height="1"/><rect x="46" y="355" width="3" height="1"/><rect x="46" y="368" width="3" height="1"/><rect x="33" y="381" width="16" height="1"/><rect x="46" y="395" width="3" height="1"/><rect x="46" y="408" width="3" height="1"/><rect x="46" y="421" width="3" height="1"/><rect x="46" y="434" width="3" height="1"/><rect x="43" y="447" width="6" height="1"/><rect x="46" y="460" width="3" height="1"/><rect x="46" y="473" width="3" height="1"/><rect x="46" y="487" width="3" height="1"/><rect x="46" y="500" width="3" height="1"/><rect x="33" y="513" width="16" height="1"/><rect x="46" y="526" width="3" height="1"/><rect x="46" y="539" width="3" height="1"/><rect x="46" y="552" width="3" height="1"/><rect x="46" y="565" width="3" height="1"/><rect x="43" y="578" width="6" height="1"/><rect x="46" y="592" width="3" height="1"/><rect x="46" y="605" width="3" height="1"/><rect x="46" y="618" width="3" height="1"/><rect x="46" y="631" width="3" height="1"/><rect x="33" y="644" width="16" height="1"/><rect x="46" y="657" width="3" height="1"/><rect x="46" y="670" width="3" height="1"/><rect x="46" y="684" width="3" height="1"/><rect x="46" y="697" width="3" height="1"/><rect x="43" y="710" width="6" height="1"/><rect x="46" y="723" width="3" height="1"/><rect x="46" y="736" width="3" height="1"/><rect x="46" y="749" width="3" height="1"/><rect x="46" y="762" width="3" height="1"/><rect x="33" y="776" width="16" height="1"/><rect x="46" y="789" width="3" height="1"/><rect x="46" y="802" width="3" height="1"/><rect x="46" y="815" width="3" height="1"/><rect x="46" y="828" width="3" height="1"/><rect x="43" y="841" width="6" height="1"/><rect x="46" y="854" width="3" height="1"/><rect x="46" y="868" width="3" height="1"/><rect x="46" y="881" width="3" height="1"/><rect x="46" y="894" width="3" height="1"/><rect x="33" y="907" width="16" height="1"/><rect x="46" y="920" width="3" height="1"/><rect x="46" y="933" width="3" height="1"/><rect x="46" y="946" width="3" height="1"/><rect x="46" y="960" width="3" height="1"/><rect x="43" y="973" width="6" height="1"/></g></svg>
<div class="t" style="left:35px;top:250px;width:60px;text-align:left;font-size:13px;letter-spacing:0.6px;font-weight:bold;color:#2a2a35;transform-origin:0 0;transform:rotate(-90deg)">200.0</div>
<div class="t" style="left:35px;top:381px;width:60px;text-align:left;font-size:13px;letter-spacing:0.6px;font-weight:bold;color:#2a2a35;transform-origin:0 0;transform:rotate(-90deg)">220.0</div>
<div class="t" style="left:35px;top:513px;width:60px;text-align:left;font-size:13px;letter-spacing:0.6px;font-weight:bold;color:#2a2a35;transform-origin:0 0;transform:rotate(-90deg)">240.0</div>
<div class="t" style="left:35px;top:644px;width:60px;text-align:left;font-size:13px;letter-spacing:0.6px;font-weight:bold;color:#2a2a35;transform-origin:0 0;transform:rotate(-90deg)">260.0</div>
<div class="t" style="left:35px;top:776px;width:60px;text-align:left;font-size:13px;letter-spacing:0.6px;font-weight:bold;color:#2a2a35;transform-origin:0 0;transform:rotate(-90deg)">280.0</div>
<div class="t" style="left:35px;top:907px;width:60px;text-align:left;font-size:13px;letter-spacing:0.6px;font-weight:bold;color:#2a2a35;transform-origin:0 0;transform:rotate(-90deg)">300.0</div>
<div style="left:52px;top:165px;width:1518px;height:795px;background:#fff;border-top:2px solid #000;border-left:2px solid #000;border-right:1px solid #000;border-bottom:1px solid #000"></div>
<svg style="left:0;top:0" width="1919" height="1027" viewBox="0 0 1919 1027"><g fill="#8c8c8c"><rect x="170" y="167" width="1" height="792"/><rect x="499" y="167" width="1" height="792"/><rect x="827" y="167" width="1" height="792"/><rect x="1156" y="167" width="1" height="792"/><rect x="1485" y="167" width="1" height="792"/><rect x="54" y="250" width="1515" height="1"/><rect x="54" y="578" width="1515" height="1"/><rect x="54" y="907" width="1515" height="1"/></g></svg>
<svg style="left:0;top:0" width="1919" height="1027" viewBox="0 0 1919 1027"><rect x="684" y="287" width="190" height="1" fill="#000000" shape-rendering="crispEdges"/><text x="902.5" y="303.2" font-family="Liberation Sans" font-size="37" letter-spacing="-1" fill="none" stroke="#000" stroke-width="0.9">2.</text><path transform="translate(931.4,303.2)" d="M11.5 -26.5 H13.9 V0 H10.1 V-20.1 Q7.5 -18.2 4 -16.8 V-21.5 Q8.5 -23.7 11.5 -26.5 Z" fill="none" stroke="#000" stroke-width="0.9"/><rect x="684" y="316" width="190" height="1" fill="#2020a0" shape-rendering="crispEdges"/><text x="902.5" y="332.5" font-family="Liberation Sans" font-size="37" letter-spacing="-1" fill="none" stroke="#000" stroke-width="0.9">2.3</text><rect x="684" y="346" width="190" height="1" fill="#d02020" shape-rendering="crispEdges"/><text x="902.5" y="361.8" font-family="Liberation Sans" font-size="37" letter-spacing="-1" fill="none" stroke="#000" stroke-width="0.9">2.5</text><rect x="684" y="376" width="190" height="1" fill="#40d040" shape-rendering="crispEdges"/><text x="902.5" y="391.4" font-family="Liberation Sans" font-size="37" letter-spacing="-1" fill="none" stroke="#000" stroke-width="0.9">2.7</text><rect x="684" y="406" width="190" height="1" fill="#e08878" shape-rendering="crispEdges"/><text x="902.5" y="421.0" font-family="Liberation Sans" font-size="37" letter-spacing="-1" fill="none" stroke="#000" stroke-width="0.9">2.9</text><rect x="684" y="436" width="190" height="1" fill="#f0f040" shape-rendering="crispEdges"/><text x="902.5" y="450.9" font-family="Liberation Sans" font-size="37" letter-spacing="-1" fill="none" stroke="#000" stroke-width="0.9">3.</text><path transform="translate(931.4,450.9)" d="M11.5 -26.5 H13.9 V0 H10.1 V-20.1 Q7.5 -18.2 4 -16.8 V-21.5 Q8.5 -23.7 11.5 -26.5 Z" fill="none" stroke="#000" stroke-width="0.9"/><rect x="684" y="466" width="190" height="1" fill="#4090d8" shape-rendering="crispEdges"/><text x="902.5" y="480.6" font-family="Liberation Sans" font-size="37" letter-spacing="-1" fill="none" stroke="#000" stroke-width="0.9">3.3</text><rect x="684" y="496" width="190" height="1" fill="#804828" shape-rendering="crispEdges"/><text x="902.5" y="509.4" font-family="Liberation Sans" font-size="37" letter-spacing="-1" fill="none" stroke="#000" stroke-width="0.9">3.5</text><rect x="684" y="526" width="190" height="1" fill="#808020" shape-rendering="crispEdges"/><text x="902.5" y="539.2" font-family="Liberation Sans" font-size="37" letter-spacing="-1" fill="none" stroke="#000" stroke-width="0.9">3.7</text><rect x="684" y="556" width="190" height="1" fill="#208070" shape-rendering="crispEdges"/><text x="902.5" y="569.1" font-family="Liberation Sans" font-size="37" letter-spacing="-1" fill="none" stroke="#000" stroke-width="0.9">3.9</text><rect x="684" y="586" width="190" height="1" fill="#c86030" shape-rendering="crispEdges"/><text x="902.5" y="600.4" font-family="Liberation Sans" font-size="37" letter-spacing="-1" fill="none" stroke="#000" stroke-width="0.9">4.</text><path transform="translate(931.4,600.4)" d="M11.5 -26.5 H13.9 V0 H10.1 V-20.1 Q7.5 -18.2 4 -16.8 V-21.5 Q8.5 -23.7 11.5 -26.5 Z" fill="none" stroke="#000" stroke-width="0.9"/><rect x="684" y="616" width="190" height="1" fill="#402080" shape-rendering="crispEdges"/><text x="902.5" y="630.0" font-family="Liberation Sans" font-size="37" letter-spacing="-1" fill="none" stroke="#000" stroke-width="0.9">4.3</text><rect x="684" y="645" width="190" height="1" fill="#f0d0dc" shape-rendering="crispEdges"/><text x="902.5" y="659.4" font-family="Liberation Sans" font-size="37" letter-spacing="-1" fill="none" stroke="#000" stroke-width="0.9">4.5</text><rect x="684" y="675" width="190" height="1" fill="#b0a8e8" shape-rendering="crispEdges"/><text x="902.5" y="689.5" font-family="Liberation Sans" font-size="37" letter-spacing="-1" fill="none" stroke="#000" stroke-width="0.9">4.7</text><rect x="684" y="705" width="190" height="1" fill="#d0f0a0" shape-rendering="crispEdges"/><text x="905.5" y="719.9" font-family="Liberation Sans" font-size="37" letter-spacing="-1" fill="none" stroke="#000" stroke-width="0.9">4.9</text><rect x="684" y="735" width="190" height="1" fill="#e89060" shape-rendering="crispEdges"/><text x="902.5" y="750.1" font-family="Liberation Sans" font-size="37" letter-spacing="-1" fill="none" stroke="#000" stroke-width="0.9">5.</text><path transform="translate(931.4,750.1)" d="M11.5 -26.5 H13.9 V0 H10.1 V-20.1 Q7.5 -18.2 4 -16.8 V-21.5 Q8.5 -23.7 11.5 -26.5 Z" fill="none" stroke="#000" stroke-width="0.9"/><rect x="684" y="765" width="190" height="1" fill="#c87898" shape-rendering="crispEdges"/><text x="902.5" y="780.5" font-family="Liberation Sans" font-size="37" letter-spacing="-1" fill="none" stroke="#000" stroke-width="0.9">5.3</text><rect x="684" y="795" width="190" height="1" fill="#8080d0" shape-rendering="crispEdges"/><text x="902.5" y="810.3" font-family="Liberation Sans" font-size="37" letter-spacing="-1" fill="none" stroke="#000" stroke-width="0.9">5.5</text><rect x="684" y="825" width="190" height="1" fill="#70c870" shape-rendering="crispEdges"/><text x="902.5" y="841.2" font-family="Liberation Sans" font-size="37" letter-spacing="-1" fill="none" stroke="#000" stroke-width="0.9">5.7</text><rect x="676.5" y="269.5" width="15" height="15" fill="#00ff00" stroke="#000" stroke-width="1"/></svg>
<div style="left:0px;top:145px;width:31px;height:834px;background:#f0f0f0"></div>
<svg style="left:0;top:0" width="1919" height="1027" viewBox="0 0 1919 1027"><rect x="5" y="148" width="1.3" height="1.3" fill="#a8a8a8"/><rect x="10" y="148" width="1.3" height="1.3" fill="#a8a8a8"/><rect x="15" y="148" width="1.3" height="1.3" fill="#a8a8a8"/><rect x="20" y="148" width="1.3" height="1.3" fill="#a8a8a8"/><rect x="25" y="148" width="1.3" height="1.3" fill="#a8a8a8"/><rect x="0" y="153" width="30" height="29" fill="#f6f6f6"/><path d="M0.5 153 V182 M0 153.5 H30" stroke="#8a8a8a" stroke-width="1"/><path d="M9.3 158.5 L22.5 165.6 L18 167.8 L22.3 175 L17.5 177.6 L13.5 170.5 L9.7 174.2 Z" fill="#d8f8e0" stroke="#1a6a2a" stroke-width="1"/><path d="M4.5 194.5 Q12 189.5 24 188.5" fill="none" stroke="#606060" stroke-width="1.4"/><path d="M11.5 191.5 L23.5 202 Q18 203 12.5 207.5 Z" fill="#d0d0e8" stroke="#222" stroke-width="1.2" stroke-linejoin="round"/><rect x="10" y="189.3" width="3" height="3" fill="#fff" stroke="#2a70b8" stroke-width="0.9"/><path d="M2 217.5 H29" stroke="#a8a8a8" stroke-width="1"/><path d="M2 440.5 H29" stroke="#a8a8a8" stroke-width="1"/><path d="M2 477.5 H29" stroke="#a8a8a8" stroke-width="1"/><path d="M2 514.5 H29" stroke="#a8a8a8" stroke-width="1"/><path d="M0 642.5 H32" stroke="#a8a8a8" stroke-width="1"/><path d="M7.3 242 L22.5 227.2" stroke="#707070" stroke-width="1.3"/><rect x="5.8" y="240.5" width="3" height="3" fill="#fff" stroke="#1a78c0" stroke-width="1"/><rect x="21.0" y="225.7" width="3" height="3" fill="#fff" stroke="#1a78c0" stroke-width="1"/><path d="M6.2 275 L15.3 266.4 L23.4 258.1" stroke="#707070" stroke-width="1.3" fill="none"/><rect x="4.7" y="273.5" width="3" height="3" fill="#fff" stroke="#1a78c0" stroke-width="1"/><rect x="13.8" y="264.9" width="3" height="3" fill="#fff" stroke="#1a78c0" stroke-width="1"/><rect x="21.9" y="256.6" width="3" height="3" fill="#fff" stroke="#1a78c0" stroke-width="1"/><path d="M5.5 302.3 L16.2 294.5 M7.3 290.2 Q16 293 19 297 M16.2 294.5 Q21 299 23.4 305.4 M19 297 L24.3 299.6" stroke="#707070" stroke-width="1.3" fill="none"/><rect x="4.0" y="300.8" width="3" height="3" fill="#fff" stroke="#1a78c0" stroke-width="1"/><rect x="14.7" y="293.0" width="3" height="3" fill="#fff" stroke="#1a78c0" stroke-width="1"/><rect x="5.8" y="288.7" width="3" height="3" fill="#fff" stroke="#1a78c0" stroke-width="1"/><rect x="22.8" y="298.1" width="3" height="3" fill="#fff" stroke="#1a78c0" stroke-width="1"/><rect x="21.9" y="303.9" width="3" height="3" fill="#fff" stroke="#1a78c0" stroke-width="1"/><rect x="5.5" y="318.6" width="19" height="18.8" fill="#ffd800" stroke="#202020" stroke-width="0.9"/><rect x="4.0" y="317.1" width="3" height="3" fill="#fff" stroke="#1a78c0" stroke-width="1"/><rect x="23.0" y="317.1" width="3" height="3" fill="#fff" stroke="#1a78c0" stroke-width="1"/><rect x="4.0" y="335.9" width="3" height="3" fill="#fff" stroke="#1a78c0" stroke-width="1"/><rect x="23.0" y="335.9" width="3" height="3" fill="#fff" stroke="#1a78c0" stroke-width="1"/><ellipse cx="15.5" cy="360" rx="10.2" ry="6.2" fill="#ffd800" stroke="#806000" stroke-width="0.9"/><rect x="13.8" y="352.3" width="3" height="3" fill="#fff" stroke="#1a78c0" stroke-width="1"/><text x="5.5" y="398.3" font-family="Liberation Serif" font-weight="bold" font-size="17" fill="#f0e070" stroke="#202020" stroke-width="0.7">f</text><path d="M15.5 381 H23.5 M19.5 381 V399 M15.5 399 H23.5" stroke="#1a5a8a" stroke-width="2.6" fill="none"/><path d="M15.5 381 H23.5 M19.5 381 V399 M15.5 399 H23.5" stroke="#5aa0d0" stroke-width="1.2" fill="none"/><path d="M16.4 416.6 V428.6 M10.4 422.6 H22.4 M12.2 418.4 L20.6 426.8 M20.6 418.4 L12.2 426.8" stroke="#111" stroke-width="1"/><circle cx="16.4" cy="422.6" r="1.6" fill="#6aa0e8"/><rect x="3" y="447.5" width="23.5" height="22" fill="#fff" stroke="#2a6ab0" stroke-width="1.2"/><path d="M6.9 448 V469 M10.8 448 V469 M14.7 448 V469 M18.6 448 V469 M22.5 448 V469 M3.5 451.2 H26 M3.5 454.8 H26 M3.5 458.5 H26 M3.5 462.2 H26 M3.5 465.9 H26 " stroke="#b03050" stroke-width="0.8"/><path d="M6 487 L24 503 M24 487 L6 503" stroke="#909090" stroke-width="6.5" stroke-linecap="square"/><path d="M6.5 487.5 L23.5 502.5 M23.5 487.5 L6.5 502.5" stroke="#383838" stroke-width="4.2"/><path d="M16.4 521.5 V545" stroke="#000" stroke-width="1.6"/><path d="M14.5 524 V543 H5 Z M18.5 524 V543 H27 Z" fill="#909090" stroke="#222" stroke-width="0.9"/><path d="M5 564 H27.5" stroke="#000" stroke-width="1.6"/><path d="M24.5 553 V562 H6 Z M24.5 566 V575.2 L6 566 Z" fill="#909090" stroke="#222" stroke-width="0.9"/><defs><linearGradient id="gsq" x1="0" y1="0" x2="1" y2="1"><stop offset="0" stop-color="#303030"/><stop offset="0.5" stop-color="#707070"/><stop offset="1" stop-color="#404040"/></linearGradient></defs><rect x="8.5" y="583.5" width="14" height="14.5" fill="url(#gsq)"/><path d="M4.5 584 V604.5 H25" fill="none" stroke="#222" stroke-width="1.6"/><path d="M25.5 604.5 L22.5 602.5 V606.5 Z" fill="#222"/><path d="M6.5 602.5 L9.5 599.5" stroke="#222" stroke-width="1"/><rect x="6.5" y="616.5" width="5.5" height="5.5" fill="#a8a8a8" stroke="#111" stroke-width="1.2"/><rect x="6.5" y="623.5" width="5.5" height="5.5" fill="#a8a8a8" stroke="#111" stroke-width="1.2"/><rect x="6.5" y="630.5" width="5.5" height="5.5" fill="#a8a8a8" stroke="#111" stroke-width="1.2"/><rect x="13.5" y="616.5" width="5.5" height="5.5" fill="#a8a8a8" stroke="#111" stroke-width="1.2"/><rect x="13.5" y="623.5" width="5.5" height="5.5" fill="#a8a8a8" stroke="#111" stroke-width="1.2"/><rect x="13.5" y="630.5" width="5.5" height="5.5" fill="#a8a8a8" stroke="#111" stroke-width="1.2"/><rect x="20.5" y="616.5" width="5.5" height="5.5" fill="#a8a8a8" stroke="#111" stroke-width="1.2"/><rect x="20.5" y="623.5" width="5.5" height="5.5" fill="#a8a8a8" stroke="#111" stroke-width="1.2"/><rect x="20.5" y="630.5" width="5.5" height="5.5" fill="#a8a8a8" stroke="#111" stroke-width="1.2"/></svg>
<div style="left:1588px;top:144px;width:1px;height:833px;background:#fbfbfb"></div>
<div style="left:1589px;top:144px;width:330px;height:1px;background:#a0a0a0"></div>
<div style="left:1593px;top:152px;width:309px;height:1px;background:#a0a0a0"></div>
<div style="left:1593px;top:153px;width:309px;height:1px;background:#fff"></div>
<div style="left:1593px;top:155px;width:309px;height:1px;background:#a0a0a0"></div>
<div style="left:1593px;top:156px;width:309px;height:1px;background:#fff"></div>
<svg style="left:1907px;top:150px" width="8" height="7" viewBox="0 0 8 7" ><path d="M1.2 1.2 L6.3 5.8 M6.3 1.2 L1.2 5.8" stroke="#000" stroke-width="1.9"/></svg>
<div style="left:1901px;top:151px;width:1px;height:6px;background:#a0a0a0"></div>
<div style="left:1600px;top:162px;width:43px;height:21px;background:#f0f0f0;border-left:1px solid #fff;border-top:1px solid #fff;border-right:1px solid #a0a0a0"></div>
<div class="t" style="left:1606px;top:166px;font-size:10.8px;color:#111">Work</div>
<div style="left:1643px;top:164px;width:44px;height:19px;background:#f0f0f0;border-left:1px solid #fff;border-top:1px solid #fff;border-right:1px solid #a0a0a0"></div>
<div class="t" style="left:1646px;top:168px;font-size:10.8px;color:#111">Output</div>
<div style="left:1687px;top:164px;width:42px;height:19px;background:#f0f0f0;border-left:1px solid #fff;border-top:1px solid #fff;border-right:1px solid #a0a0a0"></div>
<div class="t" style="left:1690px;top:168px;font-size:10.8px;color:#111">Doc</div>
<div style="left:1729px;top:164px;width:43px;height:19px;background:#f0f0f0;border-left:1px solid #fff;border-top:1px solid #fff;border-right:1px solid #a0a0a0"></div>
<div class="t" style="left:1732px;top:168px;font-size:10.8px;color:#111">User</div>
<div style="left:1772px;top:164px;width:41px;height:19px;background:#f0f0f0;border-left:1px solid #fff;border-top:1px solid #fff;border-right:1px solid #a0a0a0"></div>
<div class="t" style="left:1775px;top:168px;font-size:10.8px;color:#111">Test</div>
<div style="left:1813px;top:164px;width:61px;height:19px;background:#f0f0f0;border-left:1px solid #fff;border-top:1px solid #fff;border-right:1px solid #a0a0a0"></div>
<div class="t" style="left:1816px;top:168px;font-size:10.8px;color:#111">Transform</div>
<div style="left:1602px;top:184px;width:308px;height:120px;background:#fff;border-top:2px solid #808080;border-left:2px solid #808080;border-right:1px solid #e0e0e0;border-bottom:1px solid #e0e0e0"></div>
<div style="left:1893px;top:186px;width:16px;height:116px;background:#f0f0f0"></div>
<div style="left:1916px;top:182px;width:1px;height:440px;background:#a0a0a0"></div>
<div style="left:1604px;top:186px;width:50px;height:16px;background:#f0f0f0;border-left:1px solid #fff;border-top:1px solid #fff;border-right:2px solid #a0a0a0;border-bottom:2px solid #a0a0a0"></div>
<div class="t" style="left:1609px;top:189px;font-size:10.8px;color:#111">Layer</div>
<div style="left:1654px;top:186px;width:125px;height:16px;background:#f0f0f0;border-left:1px solid #fff;border-top:1px solid #fff;border-right:2px solid #a0a0a0;border-bottom:2px solid #a0a0a0"></div>
<div class="t" style="left:1654px;top:189px;width:124px;text-align:center;font-size:10.8px;color:#111">Mode</div>
<div style="left:1779px;top:186px;width:50px;height:16px;background:#f0f0f0;border-left:1px solid #fff;border-top:1px solid #fff;border-right:2px solid #a0a0a0;border-bottom:2px solid #a0a0a0"></div>
<div class="t" style="left:1779px;top:189px;width:49px;text-align:center;font-size:10.8px;color:#111">Output</div>
<div style="left:1829px;top:186px;width:50px;height:16px;background:#f0f0f0;border-left:1px solid #fff;border-top:1px solid #fff;border-right:2px solid #a0a0a0;border-bottom:2px solid #a0a0a0"></div>
<div class="t" style="left:1829px;top:189px;width:49px;text-align:center;font-size:10.8px;color:#111">Hide</div>
<div style="left:1879px;top:186px;width:14px;height:16px;background:#f0f0f0;border-left:1px solid #fff;border-top:1px solid #fff;border-right:2px solid #f0f0f0;border-bottom:2px solid #a0a0a0"></div>
<div style="left:1604px;top:205px;width:49px;height:13px;background:#000000"></div>
<div style="left:1655px;top:205px;width:122px;height:13px;background:#0000c8"></div>
<div style="left:1779px;top:205px;width:48px;height:13px;background:#0000c8"></div>
<div style="left:1830px;top:205px;width:49px;height:13px;background:#0000c8"></div>
<div class="t" style="left:1654px;top:206px;width:124px;text-align:center;font-size:12px;color:#fff">Laser Dot</div>
<div class="t" style="left:1779px;top:206px;width:49px;text-align:center;font-size:12px;color:#fff">Yes</div>
<div class="t" style="left:1829px;top:206px;width:49px;text-align:center;font-size:12px;color:#fff">No</div>
<div style="left:1604px;top:219px;width:49px;height:13px;background:#0000ff"></div>
<div class="t" style="left:1654px;top:220px;width:124px;text-align:center;font-size:12px;color:#000">Laser Dot</div>
<div class="t" style="left:1779px;top:220px;width:49px;text-align:center;font-size:12px;color:#000">Yes</div>
<div class="t" style="left:1829px;top:220px;width:49px;text-align:center;font-size:12px;color:#000">No</div>
<div style="left:1604px;top:233px;width:49px;height:13px;background:#ff0000"></div>
<div class="t" style="left:1654px;top:234px;width:124px;text-align:center;font-size:12px;color:#000">Laser Dot</div>
<div class="t" style="left:1779px;top:234px;width:49px;text-align:center;font-size:12px;color:#000">Yes</div>
<div class="t" style="left:1829px;top:234px;width:49px;text-align:center;font-size:12px;color:#000">No</div>
<div style="left:1604px;top:247px;width:49px;height:13px;background:#00ff00"></div>
<div class="t" style="left:1654px;top:248px;width:124px;text-align:center;font-size:12px;color:#000">Laser Dot</div>
<div class="t" style="left:1779px;top:248px;width:49px;text-align:center;font-size:12px;color:#000">Yes</div>
<div class="t" style="left:1829px;top:248px;width:49px;text-align:center;font-size:12px;color:#000">No</div>
<div style="left:1604px;top:261px;width:49px;height:13px;background:#ff8070"></div>
<div class="t" style="left:1654px;top:262px;width:124px;text-align:center;font-size:12px;color:#000">Laser Dot</div>
<div class="t" style="left:1779px;top:262px;width:49px;text-align:center;font-size:12px;color:#000">Yes</div>
<div class="t" style="left:1829px;top:262px;width:49px;text-align:center;font-size:12px;color:#000">No</div>
<div style="left:1604px;top:275px;width:49px;height:13px;background:#ffff00"></div>
<div class="t" style="left:1654px;top:276px;width:124px;text-align:center;font-size:12px;color:#000">Laser Dot</div>
<div class="t" style="left:1779px;top:276px;width:49px;text-align:center;font-size:12px;color:#000">Yes</div>
<div class="t" style="left:1829px;top:276px;width:49px;text-align:center;font-size:12px;color:#000">No</div>
<div style="left:1604px;top:289px;width:49px;height:13px;background:#2090ff"></div>
<div class="t" style="left:1654px;top:290px;width:124px;text-align:center;font-size:12px;color:#000">Laser Dot</div>
<div class="t" style="left:1779px;top:290px;width:49px;text-align:center;font-size:12px;color:#000">Yes</div>
<div class="t" style="left:1829px;top:290px;width:49px;text-align:center;font-size:12px;color:#000">No</div>
<svg style="left:0;top:0" width="1919" height="1027" viewBox="0 0 1919 1027"><g fill="#ececec"><rect x="1604" y="218" width="288" height="1"/><rect x="1604" y="232" width="288" height="1"/><rect x="1604" y="246" width="288" height="1"/><rect x="1604" y="260" width="288" height="1"/><rect x="1604" y="274" width="288" height="1"/><rect x="1604" y="288" width="288" height="1"/><rect x="1604" y="302" width="288" height="1"/><rect x="1654" y="204" width="1" height="100"/><rect x="1778" y="204" width="1" height="100"/><rect x="1828" y="204" width="1" height="100"/><rect x="1878" y="204" width="1" height="100"/><rect x="1892" y="204" width="1" height="100"/></g></svg>
<div style="left:1900px;top:203px;width:2px;height:26px;background:#808080"></div>
<div style="left:1602px;top:307px;width:308px;height:146px;background:#fff;border-top:2px solid #808080;border-left:2px solid #808080;border-right:1px solid #e0e0e0;border-bottom:1px solid #e0e0e0"></div>
<div style="left:1604px;top:308px;width:150px;height:20px;background:#d8d8d8;border-bottom:1px solid #e4e4e4"></div>
<div style="left:1756px;top:308px;width:152px;height:20px;background:#fff;border-bottom:1px solid #e8e8e8"></div>
<div class="t" style="left:1606px;top:312.2px;font-size:10.8px;color:#111">Color</div>
<div style="left:1604px;top:328px;width:150px;height:20px;background:#d8d8d8;border-bottom:1px solid #e4e4e4"></div>
<div style="left:1756px;top:328px;width:152px;height:20px;background:#fff;border-bottom:1px solid #e8e8e8"></div>
<div class="t" style="left:1606px;top:332.2px;font-size:10.8px;color:#111">Speed(mm/s)</div>
<div class="t" style="left:1759px;top:333.2px;font-size:10.8px;color:#111">130.00</div>
<div style="left:1604px;top:348px;width:150px;height:20px;background:#d8d8d8;border-bottom:1px solid #e4e4e4"></div>
<div style="left:1756px;top:348px;width:152px;height:20px;background:#fff;border-bottom:1px solid #e8e8e8"></div>
<div class="t" style="left:1606px;top:352.2px;font-size:10.8px;color:#111">Priority</div>
<div class="t" style="left:1759px;top:353.2px;font-size:10.8px;color:#111">1</div>
<div style="left:1604px;top:368px;width:150px;height:20px;background:#d8d8d8;border-bottom:1px solid #e4e4e4"></div>
<div style="left:1756px;top:368px;width:152px;height:20px;background:#fff;border-bottom:1px solid #e8e8e8"></div>
<div class="t" style="left:1606px;top:372.2px;font-size:10.8px;color:#111">MinPower(%)-1</div>
<div class="t" style="left:1759px;top:373.2px;font-size:10.8px;color:#111">50.0</div>
<div style="left:1604px;top:388px;width:150px;height:20px;background:#d8d8d8;border-bottom:1px solid #e4e4e4"></div>
<div style="left:1756px;top:388px;width:152px;height:20px;background:#fff;border-bottom:1px solid #e8e8e8"></div>
<div class="t" style="left:1606px;top:392.2px;font-size:10.8px;color:#111">MaxPower(%)-1</div>
<div class="t" style="left:1759px;top:393.2px;font-size:10.8px;color:#111">50.0</div>
<div style="left:1758px;top:310px;width:150px;height:16px;background:#000"></div>
<div class="btn" style="left:1604px;top:460px;width:50px;height:20px"></div>
<div class="btn" style="left:1654px;top:460px;width:52px;height:20px"></div>
<div class="t" style="left:1612px;top:465px;font-size:10.8px;color:#111">Laser1</div>
<div class="t" style="left:1663px;top:465px;font-size:10.8px;color:#111">Laser2</div>
<div class="grp" style="left:1608px;top:492px;width:298px;height:103px"></div>
<div style="left:1614px;top:486px;width:76px;height:12px;background:#f0f0f0"></div>
<div class="t" style="left:1616px;top:488px;font-size:10.8px;color:#111">Line/column setup</div>
<div class="t" style="left:1637px;top:503px;font-size:10.8px;color:#111">Num</div>
<div class="t" style="left:1668px;top:503px;font-size:10.8px;color:#111">Odd space</div>
<div class="t" style="left:1723px;top:503px;font-size:10.8px;color:#111">Even space</div>
<div class="t" style="left:1787px;top:503px;font-size:10.8px;color:#111">Dislocation</div>
<div class="t" style="left:1857px;top:503px;font-size:10.8px;color:#111">Mirror</div>
<div class="t" style="left:1616px;top:523px;font-size:10.8px;color:#111">X:</div>
<div class="t" style="left:1616px;top:544px;font-size:10.8px;color:#111">Y:</div>
<div class="inp" style="left:1631px;top:517px;width:34px;height:19px"></div>
<div class="t" style="left:1634px;top:521px;font-size:10.8px;color:#999">1</div>
<div class="inp" style="left:1667px;top:517px;width:53px;height:19px"></div>
<div class="t" style="left:1670px;top:521px;font-size:10.8px;color:#999">0.000</div>
<div class="inp" style="left:1722px;top:517px;width:53px;height:19px"></div>
<div class="t" style="left:1725px;top:521px;font-size:10.8px;color:#999">0.000</div>
<div class="inp" style="left:1778px;top:517px;width:52px;height:19px"></div>
<div class="t" style="left:1781px;top:521px;font-size:10.8px;color:#999">0.000</div>
<div class="inp" style="left:1631px;top:538px;width:34px;height:19px"></div>
<div class="t" style="left:1634px;top:542px;font-size:10.8px;color:#999">1</div>
<div class="inp" style="left:1667px;top:538px;width:53px;height:19px"></div>
<div class="t" style="left:1670px;top:542px;font-size:10.8px;color:#999">0.000</div>
<div class="inp" style="left:1722px;top:538px;width:53px;height:19px"></div>
<div class="t" style="left:1725px;top:542px;font-size:10.8px;color:#999">0.000</div>
<div class="inp" style="left:1778px;top:538px;width:52px;height:19px"></div>
<div class="t" style="left:1781px;top:542px;font-size:10.8px;color:#999">0.000</div>
<div class="grp" style="left:1835px;top:517px;width:63px;height:41px;border-color:#b0b0b0"></div>
<div style="left:1839px;top:521px;width:13px;height:13px;background:#f0f0f0;border:2px solid #909090"></div>
<div class="t" style="left:1855px;top:523px;font-size:10px;color:#bbb">H</div>
<div style="left:1868px;top:521px;width:13px;height:13px;background:#f0f0f0;border:2px solid #909090"></div>
<div class="t" style="left:1884px;top:523px;font-size:10px;color:#bbb">V</div>
<div style="left:1839px;top:541px;width:13px;height:13px;background:#f0f0f0;border:2px solid #909090"></div>
<div class="t" style="left:1855px;top:543px;font-size:10px;color:#bbb">H</div>
<div style="left:1868px;top:541px;width:13px;height:13px;background:#f0f0f0;border:2px solid #909090"></div>
<div class="t" style="left:1884px;top:543px;font-size:10px;color:#bbb">V</div>
<div style="left:1611px;top:559px;width:30px;height:33px;background:#f0f0f0;border:2px solid #404040;border-right:3px solid #404040;border-bottom:3px solid #404040"></div>
<svg style="left:1611px;top:559px" width="30" height="33" viewBox="0 0 30 33" ><rect x="4" y="4" width="21" height="22" fill="#fff" stroke="#222" stroke-width="1"/><path d="M7 7.5 H21 M7 7.5 V23" stroke="#111" stroke-width="0.8"/><path d="M21 7.5 l-2 -1.5 v3 Z M7 23 l-1.5 -2 h3 Z" fill="#111"/><rect x="6" y="6.5" width="2" height="2" fill="#1a1ab0"/><rect x="11" y="11" width="3.5" height="3.5" fill="none" stroke="#108060" stroke-width="1.1"/><rect x="16.5" y="11" width="3.5" height="3.5" fill="none" stroke="#108060" stroke-width="1.1"/><rect x="11" y="17" width="3.5" height="3.5" fill="none" stroke="#108060" stroke-width="1.1"/><rect x="16.5" y="17" width="3.5" height="3.5" fill="none" stroke="#108060" stroke-width="1.1"/></svg>
<div class="btn" style="left:1643px;top:562px;width:75px;height:25px"></div>
<div class="t" style="left:1643px;top:569px;width:75px;text-align:center;font-size:10.8px;color:#999">Virtual array</div>
<div class="btn" style="left:1719px;top:562px;width:87px;height:25px"></div>
<div class="t" style="left:1719px;top:569px;width:87px;text-align:center;font-size:10.8px;color:#999">Bestrew...</div>
<div class="btn" style="left:1808px;top:562px;width:56px;height:25px"></div>
<div class="t" style="left:1808px;top:569px;width:56px;text-align:center;font-size:10.8px;color:#999">Nesting</div>
<div class="btn" style="left:1865px;top:562px;width:32px;height:25px"></div>
<div class="t" style="left:1865px;top:569px;width:32px;text-align:center;font-size:10.8px;color:#000">...</div>
<div style="left:1598px;top:621px;width:319px;height:2px;background:#808080"></div>
<div style="left:1598px;top:182px;width:1px;height:440px;background:#fcfcfc"></div>
<div style="left:1589px;top:734px;width:330px;height:1px;background:#a0a0a0"></div>
<div style="left:1593px;top:741px;width:309px;height:1px;background:#a0a0a0"></div>
<div style="left:1593px;top:742px;width:309px;height:1px;background:#fff"></div>
<div style="left:1593px;top:745px;width:309px;height:1px;background:#a0a0a0"></div>
<div style="left:1593px;top:746px;width:309px;height:1px;background:#fff"></div>
<svg style="left:1907px;top:740px" width="8" height="7" viewBox="0 0 8 7" ><path d="M1.2 1.2 L6.3 5.8 M6.3 1.2 L1.2 5.8" stroke="#000" stroke-width="1.9"/></svg>
<div style="left:1901px;top:741px;width:1px;height:6px;background:#a0a0a0"></div>
<div class="grp" style="left:1595px;top:757px;width:286px;height:145px"></div>
<div style="left:1601px;top:751px;width:58px;height:12px;background:#f0f0f0"></div>
<div class="t" style="left:1603px;top:753px;font-size:10.8px;color:#111">Laser work</div>
<div class="btn" style="left:1697px;top:767px;width:101px;height:23px"></div>
<div class="t" style="left:1697px;top:773px;width:101px;text-align:center;font-size:10.8px;color:#111">Pause/Continue</div>
<div class="btn" style="left:1799px;top:767px;width:72px;height:23px"></div>
<div class="t" style="left:1799px;top:773px;width:72px;text-align:center;font-size:10.8px;color:#111">Stop</div>
<div class="btn" style="left:1604px;top:792px;width:92px;height:23px"></div>
<div class="t" style="left:1604px;top:798px;width:92px;text-align:center;font-size:10.8px;color:#111">SaveToUFile</div>
<div class="btn" style="left:1697px;top:792px;width:101px;height:23px"></div>
<div class="t" style="left:1697px;top:798px;width:101px;text-align:center;font-size:10.8px;color:#111">UFileOutput</div>
<div class="btn" style="left:1799px;top:792px;width:72px;height:23px"></div>
<div class="t" style="left:1799px;top:798px;width:72px;text-align:center;font-size:10.8px;color:#111">Download</div>
<div class="t" style="left:1654px;top:828px;font-size:10.8px;color:#111">Position:</div>
<div style="left:1700px;top:819px;width:171px;height:20px;background:#fff;border-top:2px solid #909090;border-left:2px solid #909090"></div>
<div class="t" style="left:1703px;top:824px;font-size:10.8px;color:#111">Current position</div>
<div style="left:1854px;top:821px;width:17px;height:17px;background:#f0f0f0;border:1px solid #fff;border-right:2px solid #808080;border-bottom:2px solid #808080"></div>
<svg style="left:1858px;top:827px" width="8" height="5" viewBox="0 0 8 5" ><path d="M0 0 H8 L4 4 Z" fill="#000"/></svg>
<div style="left:1604px;top:852px;width:13px;height:13px;background:#fff;border:2px solid #404040"></div>
<svg style="left:1606px;top:854px" width="9" height="9" viewBox="0 0 9 9" ><path d="M1 4 L3.5 7 L8 1" stroke="#000" stroke-width="1.6" fill="none"/></svg>
<div class="t" style="left:1621px;top:853px;font-size:10.8px;color:#111">Path optimize</div>
<div style="left:1604px;top:867px;width:13px;height:13px;background:#fff;border:2px solid #404040"></div>
<div class="t" style="left:1621px;top:868px;font-size:10.8px;color:#111">Output select graphics</div>
<div style="left:1621px;top:885px;width:13px;height:13px;background:#f0f0f0;border:2px solid #999"></div>
<div class="t" style="left:1638px;top:886px;font-size:10.8px;color:#aaa">Selected graphics position</div>
<div class="grp" style="left:1595px;top:913px;width:286px;height:41px"></div>
<div style="left:1601px;top:907px;width:40px;height:12px;background:#f0f0f0"></div>
<div class="t" style="left:1603px;top:909px;font-size:10.8px;color:#111">Device</div>
<div class="btn" style="left:1604px;top:925px;width:92px;height:23px"></div>
<div class="t" style="left:1604px;top:931px;width:92px;text-align:center;font-size:10.8px;color:#111">Setting</div>
<div style="left:1700px;top:927px;width:171px;height:20px;background:#fff;border-top:2px solid #909090;border-left:2px solid #909090"></div>
<div class="t" style="left:1703px;top:932px;font-size:10.8px;color:#111">Device---(IP:192.168.10.189)</div>
<div style="left:1854px;top:929px;width:17px;height:17px;background:#f0f0f0;border:1px solid #fff;border-right:2px solid #808080;border-bottom:2px solid #808080"></div>
<svg style="left:1858px;top:935px" width="8" height="5" viewBox="0 0 8 5" ><path d="M0 0 H8 L4 4 Z" fill="#000"/></svg>
<div style="left:1589px;top:977px;width:330px;height:1px;background:#f8f8f8"></div>
<div style="left:1589px;top:997px;width:330px;height:1px;background:#a0a0a0"></div>
<div style="left:31px;top:981px;width:888px;height:18px;border:1px solid #909090;box-shadow:inset 0 0 0 1px #fafafa"></div>
<div style="left:922px;top:981px;width:26px;height:18px;border:1px solid #909090;box-shadow:inset 0 0 0 1px #fafafa"></div>
<div style="left:950px;top:981px;width:188px;height:18px;border:1px solid #909090;box-shadow:inset 0 0 0 1px #fafafa"></div>
<div style="left:1140px;top:981px;width:42px;height:18px;border:1px solid #909090;box-shadow:inset 0 0 0 1px #fafafa"></div>
<div style="left:1184px;top:981px;width:393px;height:18px;border:1px solid #909090;box-shadow:inset 0 0 0 1px #fafafa"></div>
<div style="left:1579px;top:981px;width:10px;height:18px;border:1px solid #909090;box-shadow:inset 0 0 0 1px #fafafa"></div>
<div class="t" style="left:34px;top:983px;font-size:13.2px;color:#111">--- *Welcome to use the Laser system of cutting,Propose the display area 1920*1080 or higher *---</div>
<div class="t" style="left:956px;top:983px;font-size:13.1px;color:#111">General mode,Total count:0</div>
<div class="t" style="left:1186px;top:983px;font-size:12.4px;color:#111">RDC6442G-LY-1G-GT5-DL,UDP,X:466.406mm,Y:237.797mm</div>
<div style="left:967px;top:968px;width:17px;height:1px;background:#777"></div>
<div style="left:1578px;top:487px;width:1px;height:16px;background:#777"></div>
<div style="left:0px;top:978px;width:1589px;height:1px;background:#fff"></div>
<div style="left:0px;top:997px;width:31px;height:1px;background:#909090"></div>
<svg style="left:3px;top:1004px" width="9" height="24" viewBox="0 0 9 24" ><path d="M1.8 2.2 L6.8 7.2 M6.8 2.2 L1.8 7.2" stroke="#000" stroke-width="1.9"/><path d="M2.5 14 V22.5 H7 M5.5 14 V22.5" fill="none" stroke="#909090" stroke-width="1"/><path d="M1.8 14 V22 M4.8 14 V22" stroke="#fff" stroke-width="0.8"/></svg>
<div style="left:20px;top:1002px;width:23px;height:26px;background:#000000;border:1px solid #a0a0a0"></div>
<div style="left:45px;top:1002px;width:23px;height:26px;background:#0000ff;border:1px solid #a0a0a0"></div>
<div style="left:71px;top:1002px;width:23px;height:26px;background:#ff0000;border:1px solid #a0a0a0"></div>
<div style="left:96px;top:1002px;width:23px;height:26px;background:#00ff00;border:1px solid #a0a0a0"></div>
<div style="left:122px;top:1002px;width:23px;height:26px;background:#ff8070;border:1px solid #a0a0a0"></div>
<div style="left:147px;top:1002px;width:23px;height:26px;background:#ffff00;border:1px solid #a0a0a0"></div>
<div style="left:173px;top:1002px;width:23px;height:26px;background:#2090ff;border:1px solid #a0a0a0"></div>
<div style="left:198px;top:1002px;width:23px;height:26px;background:#8b3a1a;border:1px solid #a0a0a0"></div>
<div style="left:224px;top:1002px;width:23px;height:26px;background:#808000;border:1px solid #a0a0a0"></div>
<div style="left:249px;top:1002px;width:23px;height:26px;background:#008060;border:1px solid #a0a0a0"></div>
<div style="left:275px;top:1002px;width:23px;height:26px;background:#ff4000;border:1px solid #a0a0a0"></div>
<div style="left:300px;top:1002px;width:23px;height:26px;background:#400080;border:1px solid #a0a0a0"></div>
<div style="left:326px;top:1002px;width:23px;height:26px;background:#ffd0dc;border:1px solid #a0a0a0"></div>
<div style="left:351px;top:1002px;width:23px;height:26px;background:#b0a0f8;border:1px solid #a0a0a0"></div>
<div style="left:377px;top:1002px;width:23px;height:26px;background:#d0ff90;border:1px solid #a0a0a0"></div>
<div style="left:402px;top:1002px;width:23px;height:26px;background:#ff9050;border:1px solid #a0a0a0"></div>
<div style="left:428px;top:1002px;width:23px;height:26px;background:#d87090;border:1px solid #a0a0a0"></div>
<div style="left:453px;top:1002px;width:23px;height:26px;background:#8878d8;border:1px solid #a0a0a0"></div>
<div style="left:479px;top:1002px;width:23px;height:26px;background:#70d870;border:1px solid #a0a0a0"></div>
<div style="left:504px;top:1002px;width:23px;height:26px;background:#a89c78;border:1px solid #a0a0a0"></div>
<div style="left:530px;top:1002px;width:24px;height:25px;background:#fff"></div>
<div class="t" style="left:543.5px;top:1001px;font-size:14px;font-weight:bold;color:#0000c0">1</div>
<div class="t" style="left:543px;top:1014.4px;font-size:13px;font-weight:bold;color:#0000c0">2</div>
<svg style="left:530px;top:1002px" width="12" height="25" viewBox="0 0 12 25" ><path d="M5.8 0.8 H9.2 V21 H11 L7.5 25.5 L4 21 H5.8 Z" fill="#fff" stroke="#000" stroke-width="1.4"/></svg>
</body></html>
